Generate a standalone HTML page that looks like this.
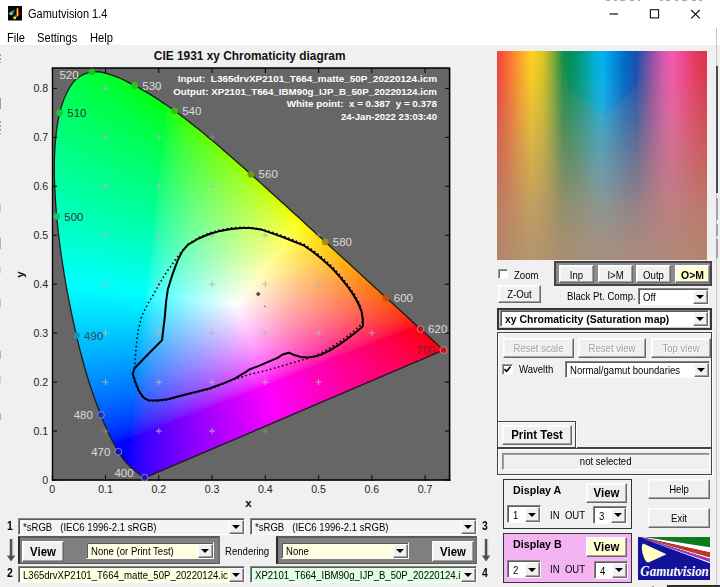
<!DOCTYPE html>
<html lang="en">
<head>
<meta charset="utf-8">
<title>Gamutvision 1.4</title>
<style>
html,body{margin:0;padding:0}
body{width:720px;height:587px;overflow:hidden;position:relative;background:#f0f0f0;font-family:"Liberation Sans",sans-serif;font-size:11px;color:#000}
.abs,.btn,.dd,.fr,.lbl,.cb{position:absolute;box-sizing:border-box}
#titlebar{left:0;top:0;width:720px;height:28px;background:#fff}
#menubar{left:0;top:28px;width:720px;height:17px;background:#fff}
.ttl{position:absolute;left:27.5px;top:7px;font-size:12px;color:#000;transform:scaleX(.915);transform-origin:0 50%;white-space:nowrap}
.mi{position:absolute;top:2px;font-size:12px;color:#000;transform:scaleX(.93);transform-origin:0 50%}
.btn{background:#f0f0f0;border:1px solid;border-color:#fff #6a6a6a #6a6a6a #fff;box-shadow:inset -1px -1px 0 #a3a3a3, inset 1px 1px 0 #fafafa;text-align:center;white-space:nowrap;font-size:11px;line-height:1}
.btn span{position:absolute;left:0;right:0;text-align:center}
.btn.dis{color:#a2a2a2;text-shadow:1px 1px 0 #fff}
.btn.b{font-weight:bold}.btn.b span{transform:scaleX(.95)}.lbl.b{font-weight:bold;transform:scaleX(.93)}.dd.b .t{font-weight:bold;transform:scaleX(.95)}.dd.pl{background:#f4f4f4}
.btn.yl{background:#ffffd2}
.dd{background:#fff;border:1px solid;border-color:#858585 #fdfdfd #fdfdfd #858585;box-shadow:inset 1px 1px 0 #5a5a5a;white-space:nowrap;overflow:hidden;font-size:11px}
.dd .t{position:absolute;left:4px;top:2px;line-height:12px;white-space:pre}
.dd .a{position:absolute;right:0;top:1px;bottom:0;width:15px;background:#f0f0f0;box-sizing:border-box;border:1px solid;border-color:#fff #6a6a6a #6a6a6a #fff;box-shadow:inset -1px -1px 0 #a3a3a3}
.dd .a:after{content:"";position:absolute;left:2px;top:50%;margin-top:-2px;border-left:4px solid transparent;border-right:4px solid transparent;border-top:4px solid #000}
.dd.yl{background:#ffffe1}
.dd.gr{background:#e1ffe1}
.fr{border:1px solid #444;box-shadow:inset 1px 1px 0 #fff, 1px 1px 0 #fff}
.lbl{white-space:pre;line-height:1;font-size:11px}
.cbx{position:absolute;box-sizing:border-box;width:11px;height:11px;background:#fff;border:1px solid;border-color:#9a9a9a #fdfdfd #fdfdfd #9a9a9a;box-shadow:inset 1px 1px 0 #6e6e6e}

#hue{background:linear-gradient(to right,#f04040 0%,#ff7030 5.8%,#ffaa28 11.6%,#ffd41c 16.7%,#dcc824 21.8%,#90b030 26.2%,#189048 31.3%,#009058 34.9%,#00a090 40.8%,#00b0d8 46.6%,#00b4f0 50.2%,#0090e0 55.3%,#0068c8 61.1%,#1450b0 66.2%,#5050a8 69.9%,#9850a8 74.2%,#d858b0 79.3%,#f858b0 83.7%,#f04890 88.8%,#e83860 94.6%,#e03048 100%)}
#hue:after{content:"";position:absolute;left:0;top:0;right:0;bottom:0;background:linear-gradient(to right,#b3856a 0%,#b6966c 16%,#aa8e70 30%,#a59082 50%,#ae887c 75%,#b6846e 100%);-webkit-mask-image:linear-gradient(to bottom,rgba(0,0,0,0) 0%,rgba(0,0,0,.14) 15%,rgba(0,0,0,.52) 45%,rgba(0,0,0,.86) 75%,rgba(0,0,0,.96) 90%,rgba(0,0,0,1) 100%);mask-image:linear-gradient(to bottom,rgba(0,0,0,0) 0%,rgba(0,0,0,.14) 15%,rgba(0,0,0,.52) 45%,rgba(0,0,0,.86) 75%,rgba(0,0,0,.96) 90%,rgba(0,0,0,1) 100%)}
.lbl,.dd .t{transform:scaleX(.87);transform-origin:0 50%}
.btn span{transform:scaleX(.87)}
</style>
</head>
<body>
<div id="titlebar" class="abs"></div>
<div id="menubar" class="abs"></div>
<svg class="plot" width="720" height="587" viewBox="0 0 720 587" style="position:absolute;left:0;top:0">
<defs><clipPath id="lc"><polygon points="145.0,477.6 145.0,477.6 144.9,477.6 144.8,477.6 144.7,477.6 144.6,477.7 144.4,477.6 144.2,477.6 144.0,477.6 143.8,477.6 143.6,477.5 143.3,477.4 143.1,477.3 142.9,477.1 142.6,476.9 142.2,476.6 141.8,476.3 141.3,475.9 140.8,475.5 140.3,475.0 139.8,474.7 139.5,474.4 139.1,474.1 138.8,473.8 138.5,473.6 138.1,473.2 137.7,472.9 137.2,472.5 136.7,472.2 136.2,471.8 135.7,471.3 135.1,470.9 134.6,470.4 134.0,470.0 133.4,469.4 132.7,468.9 132.0,468.3 131.3,467.7 130.6,467.0 129.8,466.3 129.0,465.5 128.2,464.6 127.3,463.8 126.4,462.8 125.5,461.7 124.5,460.5 123.4,459.0 122.2,457.5 121.0,455.8 119.7,453.9 118.4,451.7 117.0,449.3 115.5,446.8 114.0,444.0 112.4,441.0 110.7,437.5 108.9,433.7 107.0,429.6 105.1,425.2 103.0,420.4 100.9,415.0 98.7,409.3 96.3,403.1 93.8,396.5 91.4,389.4 88.9,381.8 86.4,373.5 83.9,364.8 81.4,355.5 78.9,345.8 76.5,335.6 74.0,324.9 71.6,313.6 69.2,301.9 66.9,289.9 64.8,278.0 62.9,265.9 61.0,253.4 59.3,240.9 57.9,228.5 56.7,216.5 55.7,204.6 55.0,192.8 54.5,181.3 54.3,170.1 54.4,159.5 54.8,149.2 55.6,139.3 56.6,129.8 58.0,120.9 59.7,112.8 61.8,105.4 64.2,98.6 66.9,92.4 69.9,87.1 73.0,82.5 76.4,78.9 80.0,76.2 83.9,74.1 87.9,72.8 91.9,71.9 96.0,71.6 100.2,72.0 104.5,72.9 108.8,74.2 113.1,75.6 117.4,77.1 121.8,79.0 126.1,81.1 130.4,83.3 134.7,85.5 138.8,87.7 142.9,90.1 147.0,92.4 151.0,94.9 155.0,97.4 159.0,100.0 162.9,102.6 166.8,105.3 170.7,108.0 174.6,110.8 178.4,113.6 182.3,116.5 186.2,119.4 190.0,122.4 193.8,125.5 197.7,128.5 201.5,131.6 205.3,134.8 209.1,137.9 212.9,141.1 216.7,144.3 220.5,147.6 224.3,150.9 228.1,154.2 231.9,157.5 235.7,160.8 239.5,164.2 243.4,167.5 247.2,170.9 251.0,174.3 254.8,177.7 258.6,181.1 262.4,184.5 266.1,188.0 269.9,191.4 273.7,194.8 277.5,198.2 281.3,201.7 285.0,205.1 288.8,208.5 292.5,211.9 296.2,215.3 299.9,218.6 303.6,222.0 307.3,225.4 310.9,228.7 314.5,232.0 318.1,235.3 321.7,238.6 325.2,241.8 328.7,245.0 332.2,248.2 335.6,251.4 339.0,254.5 342.4,257.6 345.7,260.6 349.0,263.6 352.3,266.6 355.5,269.5 358.6,272.4 361.7,275.2 364.7,278.0 367.7,280.7 370.5,283.3 373.3,285.9 376.1,288.4 378.7,290.8 381.2,293.2 383.7,295.4 386.2,297.7 388.6,299.8 390.9,302.0 393.2,304.1 395.4,306.1 397.5,308.0 399.5,309.8 401.4,311.6 403.3,313.3 405.1,314.9 406.8,316.5 408.5,318.0 410.1,319.5 411.6,320.9 413.1,322.2 414.5,323.5 415.7,324.7 416.9,325.7 418.0,326.8 419.2,327.8 420.5,329.1 422.1,330.6 424.0,332.2 425.8,333.9 427.6,335.6 429.3,337.1 430.7,338.3 431.9,339.5 433.1,340.6 434.2,341.6 435.2,342.5 436.1,343.3 436.9,344.1 437.6,344.7 438.3,345.3 438.9,345.9 439.4,346.4 439.9,346.8 440.3,347.1 440.6,347.5 441.0,347.8 441.4,348.2 441.8,348.6 442.2,348.9 442.6,349.2 442.8,349.5 443.1,349.7 443.2,349.9 443.4,350.0 443.5,350.1 443.5,350.1"/></clipPath><linearGradient id="g0"><stop offset="0" stop-color="#00ff36"/><stop offset="1" stop-color="#00ff2b"/></linearGradient><linearGradient id="g1"><stop offset="0" stop-color="#00ff3d"/><stop offset="1" stop-color="#00ff26"/></linearGradient><linearGradient id="g2"><stop offset="0" stop-color="#00ff41"/><stop offset="1" stop-color="#00ff22"/></linearGradient><linearGradient id="g3"><stop offset="0" stop-color="#00ff45"/><stop offset="0.9778" stop-color="#00ff20"/><stop offset="1" stop-color="#00ff1f"/></linearGradient><linearGradient id="g4"><stop offset="0" stop-color="#00ff48"/><stop offset="0.902" stop-color="#00ff23"/><stop offset="1" stop-color="#00ff1d"/></linearGradient><linearGradient id="g5"><stop offset="0" stop-color="#00ff4b"/><stop offset="0.8596" stop-color="#00ff24"/><stop offset="1" stop-color="#00ff1a"/></linearGradient><linearGradient id="g6"><stop offset="0" stop-color="#00ff4e"/><stop offset="0.8095" stop-color="#00ff27"/><stop offset="1" stop-color="#00ff18"/></linearGradient><linearGradient id="g7"><stop offset="0" stop-color="#00ff50"/><stop offset="0.7794" stop-color="#00ff29"/><stop offset="1" stop-color="#00ff15"/></linearGradient><linearGradient id="g8"><stop offset="0" stop-color="#00ff52"/><stop offset="0.7534" stop-color="#00ff2a"/><stop offset="1" stop-color="#00ff12"/></linearGradient><linearGradient id="g9"><stop offset="0" stop-color="#00ff55"/><stop offset="0.7273" stop-color="#00ff2d"/><stop offset="1" stop-color="#00ff10"/></linearGradient><linearGradient id="g10"><stop offset="0" stop-color="#00ff57"/><stop offset="0.7073" stop-color="#00ff2e"/><stop offset="0.9756" stop-color="#00ff11"/><stop offset="1" stop-color="#00ff0c"/></linearGradient><linearGradient id="g11"><stop offset="0" stop-color="#00ff59"/><stop offset="0.6977" stop-color="#00ff30"/><stop offset="0.9651" stop-color="#00ff12"/><stop offset="1" stop-color="#00ff0a"/></linearGradient><linearGradient id="g12"><stop offset="0" stop-color="#00ff5b"/><stop offset="0.6778" stop-color="#00ff32"/><stop offset="0.9444" stop-color="#00ff14"/><stop offset="1" stop-color="#00ff07"/></linearGradient><linearGradient id="g13"><stop offset="0" stop-color="#00ff5d"/><stop offset="0.6702" stop-color="#00ff33"/><stop offset="0.9362" stop-color="#00ff15"/><stop offset="0.9894" stop-color="#00ff08"/><stop offset="1" stop-color="#00ff02"/></linearGradient><linearGradient id="g14"><stop offset="0" stop-color="#00ff5f"/><stop offset="0.6465" stop-color="#00ff36"/><stop offset="0.9192" stop-color="#00ff15"/><stop offset="0.9798" stop-color="#00ff05"/><stop offset="1" stop-color="#00ff00"/></linearGradient><linearGradient id="g15"><stop offset="0" stop-color="#00ff61"/><stop offset="0.6408" stop-color="#00ff37"/><stop offset="0.9126" stop-color="#00ff16"/><stop offset="0.9709" stop-color="#00ff06"/><stop offset="0.9806" stop-color="#00ff00"/><stop offset="1" stop-color="#00ff00"/></linearGradient><linearGradient id="g16"><stop offset="0" stop-color="#00ff63"/><stop offset="0.6381" stop-color="#00ff38"/><stop offset="0.9143" stop-color="#00ff17"/><stop offset="0.9714" stop-color="#00ff07"/><stop offset="0.981" stop-color="#00ff00"/><stop offset="1" stop-color="#00ff00"/></linearGradient><linearGradient id="g17"><stop offset="0" stop-color="#00ff65"/><stop offset="0.6239" stop-color="#00ff3b"/><stop offset="0.8991" stop-color="#00ff19"/><stop offset="0.9633" stop-color="#00ff09"/><stop offset="0.9725" stop-color="#00ff03"/><stop offset="1" stop-color="#12ff00"/></linearGradient><linearGradient id="g18"><stop offset="0" stop-color="#00ff66"/><stop offset="0.6161" stop-color="#00ff3c"/><stop offset="0.8929" stop-color="#00ff1a"/><stop offset="0.9464" stop-color="#00ff0d"/><stop offset="0.9643" stop-color="#0fff05"/><stop offset="0.9821" stop-color="#17ff00"/><stop offset="1" stop-color="#1dff00"/></linearGradient><linearGradient id="g19"><stop offset="0" stop-color="#00ff68"/><stop offset="0.6121" stop-color="#00ff3d"/><stop offset="0.8879" stop-color="#00ff1a"/><stop offset="0.9224" stop-color="#04ff13"/><stop offset="0.9569" stop-color="#17ff07"/><stop offset="0.9655" stop-color="#1aff00"/><stop offset="1" stop-color="#25ff00"/></linearGradient><linearGradient id="g20"><stop offset="0" stop-color="#00ff6a"/><stop offset="0.6" stop-color="#00ff3f"/><stop offset="0.875" stop-color="#00ff1c"/><stop offset="0.8917" stop-color="#00ff19"/><stop offset="0.9333" stop-color="#18ff0f"/><stop offset="0.9667" stop-color="#23ff00"/><stop offset="1" stop-color="#2cff00"/></linearGradient><linearGradient id="g21"><stop offset="0" stop-color="#00ff6c"/><stop offset="0.5984" stop-color="#00ff41"/><stop offset="0.877" stop-color="#00ff1d"/><stop offset="0.9098" stop-color="#16ff16"/><stop offset="0.959" stop-color="#26ff04"/><stop offset="0.9836" stop-color="#2cff00"/><stop offset="1" stop-color="#30ff00"/></linearGradient><linearGradient id="g22"><stop offset="0" stop-color="#00ff6d"/><stop offset="0.592" stop-color="#00ff42"/><stop offset="0.856" stop-color="#00ff20"/><stop offset="0.872" stop-color="#0fff1e"/><stop offset="0.944" stop-color="#29ff0a"/><stop offset="0.96" stop-color="#2dff00"/><stop offset="1" stop-color="#36ff00"/></linearGradient><linearGradient id="g23"><stop offset="0" stop-color="#00ff6f"/><stop offset="0.5814" stop-color="#00ff44"/><stop offset="0.8372" stop-color="#02ff24"/><stop offset="0.8527" stop-color="#10ff21"/><stop offset="0.938" stop-color="#2eff0b"/><stop offset="0.9535" stop-color="#31ff00"/><stop offset="1" stop-color="#3cff00"/></linearGradient><linearGradient id="g24"><stop offset="0" stop-color="#00ff71"/><stop offset="0.5802" stop-color="#00ff46"/><stop offset="0.8168" stop-color="#00ff28"/><stop offset="0.855" stop-color="#18ff22"/><stop offset="0.9389" stop-color="#32ff0c"/><stop offset="0.9618" stop-color="#38ff00"/><stop offset="1" stop-color="#40ff00"/></linearGradient><linearGradient id="g25"><stop offset="0" stop-color="#00ff73"/><stop offset="0.5704" stop-color="#00ff48"/><stop offset="0.8" stop-color="#00ff2b"/><stop offset="0.8296" stop-color="#16ff26"/><stop offset="0.9333" stop-color="#36ff0d"/><stop offset="0.9556" stop-color="#3cff00"/><stop offset="1" stop-color="#45ff00"/></linearGradient><linearGradient id="g26"><stop offset="0" stop-color="#00ff74"/><stop offset="0.5693" stop-color="#00ff49"/><stop offset="0.7883" stop-color="#00ff2e"/><stop offset="0.8102" stop-color="#13ff2b"/><stop offset="0.9124" stop-color="#35ff15"/><stop offset="0.9489" stop-color="#3eff06"/><stop offset="0.9562" stop-color="#40ff00"/><stop offset="1" stop-color="#49ff00"/></linearGradient><linearGradient id="g27"><stop offset="0" stop-color="#00ff76"/><stop offset="0.5643" stop-color="#00ff4a"/><stop offset="0.7714" stop-color="#00ff31"/><stop offset="0.7857" stop-color="#10ff2f"/><stop offset="0.8643" stop-color="#2eff20"/><stop offset="0.9357" stop-color="#40ff0c"/><stop offset="0.95" stop-color="#43ff00"/><stop offset="1" stop-color="#4eff00"/></linearGradient><linearGradient id="g28"><stop offset="0" stop-color="#00ff78"/><stop offset="0.5556" stop-color="#00ff4c"/><stop offset="0.75" stop-color="#00ff35"/><stop offset="0.7917" stop-color="#1bff2e"/><stop offset="0.9167" stop-color="#41ff12"/><stop offset="0.9514" stop-color="#49ff00"/><stop offset="1" stop-color="#53ff00"/></linearGradient><linearGradient id="g29"><stop offset="0" stop-color="#00ff7a"/><stop offset="0.5548" stop-color="#00ff4e"/><stop offset="0.7397" stop-color="#00ff37"/><stop offset="0.774" stop-color="#19ff32"/><stop offset="0.8973" stop-color="#40ff19"/><stop offset="0.9452" stop-color="#4bff05"/><stop offset="0.9589" stop-color="#4eff00"/><stop offset="1" stop-color="#57ff00"/></linearGradient><linearGradient id="g30"><stop offset="0" stop-color="#00ff7b"/><stop offset="0.5541" stop-color="#00ff4f"/><stop offset="0.7297" stop-color="#00ff3a"/><stop offset="0.7568" stop-color="#16ff36"/><stop offset="0.8649" stop-color="#3bff22"/><stop offset="0.9392" stop-color="#4dff0b"/><stop offset="0.9527" stop-color="#50ff00"/><stop offset="1" stop-color="#5aff00"/></linearGradient><linearGradient id="g31"><stop offset="0" stop-color="#00ff7d"/><stop offset="0.5497" stop-color="#00ff50"/><stop offset="0.7152" stop-color="#00ff3c"/><stop offset="0.7285" stop-color="#0fff3a"/><stop offset="0.8013" stop-color="#2eff2f"/><stop offset="0.9205" stop-color="#4eff12"/><stop offset="0.9404" stop-color="#52ff08"/><stop offset="0.947" stop-color="#54ff01"/><stop offset="1" stop-color="#5fff00"/></linearGradient><linearGradient id="g32"><stop offset="0" stop-color="#00ff7f"/><stop offset="0.5455" stop-color="#00ff52"/><stop offset="0.7078" stop-color="#00ff3f"/><stop offset="0.7208" stop-color="#10ff3d"/><stop offset="0.7922" stop-color="#2fff31"/><stop offset="0.9221" stop-color="#51ff13"/><stop offset="0.9545" stop-color="#59ff00"/><stop offset="1" stop-color="#62ff00"/></linearGradient><linearGradient id="g33"><stop offset="0" stop-color="#00ff80"/><stop offset="0.535" stop-color="#00ff54"/><stop offset="0.6879" stop-color="#00ff42"/><stop offset="0.7197" stop-color="#19ff3d"/><stop offset="0.828" stop-color="#3fff2b"/><stop offset="0.9299" stop-color="#58ff0e"/><stop offset="0.949" stop-color="#5cff00"/><stop offset="1" stop-color="#67ff00"/></linearGradient><linearGradient id="g34"><stop offset="0" stop-color="#00ff82"/><stop offset="0.5346" stop-color="#00ff56"/><stop offset="0.6792" stop-color="#00ff44"/><stop offset="0.7044" stop-color="#16ff41"/><stop offset="0.7987" stop-color="#3aff32"/><stop offset="0.9182" stop-color="#58ff14"/><stop offset="0.9434" stop-color="#5eff08"/><stop offset="0.9497" stop-color="#5fff00"/><stop offset="1" stop-color="#6aff00"/></linearGradient><linearGradient id="g35"><stop offset="0" stop-color="#00ff83"/><stop offset="0.5342" stop-color="#00ff57"/><stop offset="0.6708" stop-color="#00ff47"/><stop offset="0.6894" stop-color="#13ff44"/><stop offset="0.7702" stop-color="#35ff38"/><stop offset="0.913" stop-color="#5bff17"/><stop offset="0.9441" stop-color="#62ff09"/><stop offset="0.9565" stop-color="#64ff00"/><stop offset="1" stop-color="#6dff00"/></linearGradient><linearGradient id="g36"><stop offset="0" stop-color="#00ff85"/><stop offset="0.5305" stop-color="#00ff59"/><stop offset="0.6585" stop-color="#00ff49"/><stop offset="0.6707" stop-color="#10ff47"/><stop offset="0.7378" stop-color="#2fff3d"/><stop offset="0.9024" stop-color="#5dff1a"/><stop offset="0.9451" stop-color="#66ff05"/><stop offset="0.9573" stop-color="#69ff00"/><stop offset="1" stop-color="#72ff00"/></linearGradient><linearGradient id="g37"><stop offset="0" stop-color="#00ff86"/><stop offset="0.5241" stop-color="#00ff5b"/><stop offset="0.6506" stop-color="#03ff4b"/><stop offset="0.6687" stop-color="#15ff49"/><stop offset="0.753" stop-color="#38ff3c"/><stop offset="0.9036" stop-color="#60ff1b"/><stop offset="0.9458" stop-color="#6aff07"/><stop offset="0.9518" stop-color="#6bff00"/><stop offset="1" stop-color="#75ff00"/></linearGradient><linearGradient id="g38"><stop offset="0" stop-color="#00ff88"/><stop offset="0.5207" stop-color="#00ff5d"/><stop offset="0.6391" stop-color="#00ff4e"/><stop offset="0.6686" stop-color="#1aff4a"/><stop offset="0.7692" stop-color="#40ff3b"/><stop offset="0.9112" stop-color="#65ff1a"/><stop offset="0.9467" stop-color="#6dff08"/><stop offset="0.9527" stop-color="#6eff00"/><stop offset="1" stop-color="#79ff00"/></linearGradient><linearGradient id="g39"><stop offset="0" stop-color="#00ff8a"/><stop offset="0.5174" stop-color="#00ff5e"/><stop offset="0.6279" stop-color="#00ff51"/><stop offset="0.6512" stop-color="#17ff4d"/><stop offset="0.7384" stop-color="#3bff40"/><stop offset="0.9012" stop-color="#67ff1c"/><stop offset="0.9419" stop-color="#70ff0a"/><stop offset="0.9535" stop-color="#73ff00"/><stop offset="1" stop-color="#7dff00"/></linearGradient><linearGradient id="g40"><stop offset="0" stop-color="#00ff8b"/><stop offset="0.5172" stop-color="#00ff5f"/><stop offset="0.6207" stop-color="#00ff53"/><stop offset="0.6379" stop-color="#14ff50"/><stop offset="0.7126" stop-color="#36ff46"/><stop offset="0.8908" stop-color="#68ff21"/><stop offset="0.9425" stop-color="#74ff0b"/><stop offset="0.954" stop-color="#76ff00"/><stop offset="1" stop-color="#80ff00"/></linearGradient><linearGradient id="g41"><stop offset="0" stop-color="#00ff8d"/><stop offset="0.5114" stop-color="#00ff61"/><stop offset="0.6136" stop-color="#00ff55"/><stop offset="0.625" stop-color="#11ff53"/><stop offset="0.6875" stop-color="#31ff4b"/><stop offset="0.8693" stop-color="#66ff28"/><stop offset="0.9432" stop-color="#77ff0c"/><stop offset="0.9545" stop-color="#7aff00"/><stop offset="1" stop-color="#83ff00"/></linearGradient><linearGradient id="g42"><stop offset="0" stop-color="#00ff8e"/><stop offset="0.5084" stop-color="#00ff63"/><stop offset="0.5978" stop-color="#00ff58"/><stop offset="0.6257" stop-color="#19ff54"/><stop offset="0.7207" stop-color="#41ff46"/><stop offset="0.8883" stop-color="#6fff22"/><stop offset="0.9441" stop-color="#7cff09"/><stop offset="0.9497" stop-color="#7dff01"/><stop offset="1" stop-color="#88ff00"/></linearGradient><linearGradient id="g43"><stop offset="0" stop-color="#00ff90"/><stop offset="0.5028" stop-color="#00ff65"/><stop offset="0.5912" stop-color="#00ff5a"/><stop offset="0.6133" stop-color="#17ff57"/><stop offset="0.6961" stop-color="#3cff4b"/><stop offset="0.884" stop-color="#71ff24"/><stop offset="0.9448" stop-color="#7fff0a"/><stop offset="0.9558" stop-color="#82ff00"/><stop offset="1" stop-color="#8bff00"/></linearGradient><linearGradient id="g44"><stop offset="0" stop-color="#00ff92"/><stop offset="0.5027" stop-color="#00ff66"/><stop offset="0.5847" stop-color="#00ff5c"/><stop offset="0.6011" stop-color="#14ff5a"/><stop offset="0.6721" stop-color="#37ff50"/><stop offset="0.8689" stop-color="#70ff2a"/><stop offset="0.9399" stop-color="#81ff0f"/><stop offset="0.9563" stop-color="#85ff00"/><stop offset="1" stop-color="#8eff00"/></linearGradient><linearGradient id="g45"><stop offset="0" stop-color="#00ff93"/><stop offset="0.5" stop-color="#00ff68"/><stop offset="0.5753" stop-color="#00ff5e"/><stop offset="0.586" stop-color="#10ff5d"/><stop offset="0.6398" stop-color="#2fff56"/><stop offset="0.8011" stop-color="#63ff3a"/><stop offset="0.9194" stop-color="#81ff18"/><stop offset="0.9462" stop-color="#87ff08"/><stop offset="0.9516" stop-color="#88ff00"/><stop offset="1" stop-color="#93ff00"/></linearGradient><linearGradient id="g46"><stop offset="0" stop-color="#00ff95"/><stop offset="0.4947" stop-color="#00ff6a"/><stop offset="0.5691" stop-color="#02ff61"/><stop offset="0.5798" stop-color="#11ff5f"/><stop offset="0.6383" stop-color="#32ff57"/><stop offset="0.8085" stop-color="#68ff39"/><stop offset="0.9202" stop-color="#84ff19"/><stop offset="0.9468" stop-color="#8aff0a"/><stop offset="0.9574" stop-color="#8dff00"/><stop offset="1" stop-color="#96ff00"/></linearGradient><linearGradient id="g47"><stop offset="0" stop-color="#00ff96"/><stop offset="0.4947" stop-color="#00ff6b"/><stop offset="0.5579" stop-color="#00ff63"/><stop offset="0.5842" stop-color="#1aff60"/><stop offset="0.6684" stop-color="#41ff54"/><stop offset="0.8684" stop-color="#7bff2c"/><stop offset="0.9421" stop-color="#8cff0f"/><stop offset="0.9579" stop-color="#90ff00"/><stop offset="1" stop-color="#99ff00"/></linearGradient><linearGradient id="g48"><stop offset="0" stop-color="#00ff98"/><stop offset="0.4896" stop-color="#00ff6d"/><stop offset="0.5521" stop-color="#00ff66"/><stop offset="0.5729" stop-color="#18ff63"/><stop offset="0.651" stop-color="#3eff58"/><stop offset="0.8542" stop-color="#7aff31"/><stop offset="0.9375" stop-color="#8eff13"/><stop offset="0.9583" stop-color="#93ff00"/><stop offset="1" stop-color="#9dff00"/></linearGradient><linearGradient id="g49"><stop offset="0" stop-color="#00ff9a"/><stop offset="0.4872" stop-color="#00ff6f"/><stop offset="0.5436" stop-color="#00ff68"/><stop offset="0.559" stop-color="#14ff66"/><stop offset="0.6256" stop-color="#38ff5d"/><stop offset="0.8103" stop-color="#73ff3b"/><stop offset="0.9231" stop-color="#8fff19"/><stop offset="0.9487" stop-color="#95ff09"/><stop offset="0.9538" stop-color="#97ff00"/><stop offset="1" stop-color="#a1ff00"/></linearGradient><linearGradient id="g50"><stop offset="0" stop-color="#00ff9b"/><stop offset="0.4873" stop-color="#00ff70"/><stop offset="0.5381" stop-color="#00ff6a"/><stop offset="0.5482" stop-color="#11ff69"/><stop offset="0.599" stop-color="#30ff62"/><stop offset="0.7513" stop-color="#66ff49"/><stop offset="0.8985" stop-color="#8dff24"/><stop offset="0.9492" stop-color="#99ff0a"/><stop offset="0.9594" stop-color="#9bff00"/><stop offset="1" stop-color="#a4ff00"/></linearGradient><linearGradient id="g51"><stop offset="0" stop-color="#00ff9d"/><stop offset="0.4824" stop-color="#00ff72"/><stop offset="0.5276" stop-color="#00ff6d"/><stop offset="0.5528" stop-color="#1aff69"/><stop offset="0.6332" stop-color="#42ff5e"/><stop offset="0.8392" stop-color="#81ff37"/><stop offset="0.9347" stop-color="#99ff16"/><stop offset="0.9598" stop-color="#9fff00"/><stop offset="1" stop-color="#a8ff00"/></linearGradient><linearGradient id="g52"><stop offset="0" stop-color="#00ff9e"/><stop offset="0.4826" stop-color="#00ff74"/><stop offset="0.5224" stop-color="#00ff6f"/><stop offset="0.5423" stop-color="#17ff6c"/><stop offset="0.6119" stop-color="#3cff63"/><stop offset="0.801" stop-color="#7aff41"/><stop offset="0.9204" stop-color="#98ff1e"/><stop offset="0.9552" stop-color="#a1ff08"/><stop offset="0.9602" stop-color="#a2ff00"/><stop offset="1" stop-color="#abff00"/></linearGradient><linearGradient id="g53"><stop offset="0" stop-color="#00ffa0"/><stop offset="0.4755" stop-color="#00ff76"/><stop offset="0.5147" stop-color="#00ff71"/><stop offset="0.5294" stop-color="#14ff6f"/><stop offset="0.5882" stop-color="#37ff67"/><stop offset="0.7549" stop-color="#71ff4b"/><stop offset="0.902" stop-color="#98ff25"/><stop offset="0.9461" stop-color="#a3ff0e"/><stop offset="0.9559" stop-color="#a5ff00"/><stop offset="1" stop-color="#b0ff00"/></linearGradient><linearGradient id="g54"><stop offset="0" stop-color="#00ffa2"/><stop offset="0.4757" stop-color="#00ff77"/><stop offset="0.5097" stop-color="#00ff73"/><stop offset="0.5194" stop-color="#11ff72"/><stop offset="0.568" stop-color="#31ff6b"/><stop offset="0.7087" stop-color="#66ff55"/><stop offset="0.8786" stop-color="#95ff2e"/><stop offset="0.9417" stop-color="#a5ff13"/><stop offset="0.9612" stop-color="#aaff00"/><stop offset="1" stop-color="#b3ff00"/></linearGradient><linearGradient id="g55"><stop offset="0" stop-color="#00ffa3"/><stop offset="0.4712" stop-color="#00ff79"/><stop offset="0.5048" stop-color="#00ff75"/><stop offset="0.5096" stop-color="#0cff75"/><stop offset="0.5433" stop-color="#27ff70"/><stop offset="0.6538" stop-color="#56ff60"/><stop offset="0.8558" stop-color="#93ff36"/><stop offset="0.9375" stop-color="#a7ff17"/><stop offset="0.9567" stop-color="#acff07"/><stop offset="0.9615" stop-color="#adff00"/><stop offset="1" stop-color="#b6ff00"/></linearGradient><linearGradient id="g56"><stop offset="0" stop-color="#00ffa5"/><stop offset="0.4714" stop-color="#00ff7b"/><stop offset="0.4952" stop-color="#00ff78"/><stop offset="0.519" stop-color="#1bff75"/><stop offset="0.5952" stop-color="#43ff6b"/><stop offset="0.7905" stop-color="#84ff48"/><stop offset="0.9143" stop-color="#a5ff23"/><stop offset="0.9524" stop-color="#aeff0e"/><stop offset="0.9619" stop-color="#b1ff00"/><stop offset="1" stop-color="#baff00"/></linearGradient><linearGradient id="g57"><stop offset="0" stop-color="#00ffa6"/><stop offset="0.467" stop-color="#00ff7d"/><stop offset="0.4906" stop-color="#00ff7a"/><stop offset="0.5094" stop-color="#18ff78"/><stop offset="0.5755" stop-color="#3eff6f"/><stop offset="0.75" stop-color="#7bff52"/><stop offset="0.9009" stop-color="#a5ff2a"/><stop offset="0.9528" stop-color="#b2ff0f"/><stop offset="0.967" stop-color="#b5ff00"/><stop offset="1" stop-color="#bdff00"/></linearGradient><linearGradient id="g58"><stop offset="0" stop-color="#00ffa8"/><stop offset="0.4651" stop-color="#00ff7f"/><stop offset="0.4837" stop-color="#00ff7c"/><stop offset="0.4977" stop-color="#15ff7b"/><stop offset="0.5535" stop-color="#38ff73"/><stop offset="0.707" stop-color="#72ff5b"/><stop offset="0.8791" stop-color="#a3ff31"/><stop offset="0.9442" stop-color="#b4ff14"/><stop offset="0.9628" stop-color="#b9ff00"/><stop offset="1" stop-color="#c2ff00"/></linearGradient><linearGradient id="g59"><stop offset="0" stop-color="#00ffaa"/><stop offset="0.4608" stop-color="#00ff81"/><stop offset="0.4793" stop-color="#00ff7e"/><stop offset="0.4885" stop-color="#11ff7d"/><stop offset="0.5346" stop-color="#32ff77"/><stop offset="0.6682" stop-color="#68ff63"/><stop offset="0.8571" stop-color="#a1ff39"/><stop offset="0.9401" stop-color="#b6ff18"/><stop offset="0.9585" stop-color="#bbff08"/><stop offset="0.9631" stop-color="#bcff00"/><stop offset="1" stop-color="#c5ff00"/></linearGradient><linearGradient id="g60"><stop offset="0" stop-color="#00ffab"/><stop offset="0.4612" stop-color="#00ff82"/><stop offset="0.4749" stop-color="#03ff81"/><stop offset="0.484" stop-color="#13ff7f"/><stop offset="0.5342" stop-color="#35ff79"/><stop offset="0.6758" stop-color="#6eff63"/><stop offset="0.863" stop-color="#a6ff39"/><stop offset="0.9406" stop-color="#baff19"/><stop offset="0.9589" stop-color="#beff0a"/><stop offset="0.9635" stop-color="#c0ff00"/><stop offset="1" stop-color="#c8ff00"/></linearGradient><linearGradient id="g61"><stop offset="0" stop-color="#00ffad"/><stop offset="0.4615" stop-color="#00ff84"/><stop offset="0.4661" stop-color="#00ff83"/><stop offset="0.4842" stop-color="#18ff81"/><stop offset="0.5475" stop-color="#3fff79"/><stop offset="0.7104" stop-color="#7cff5e"/><stop offset="0.8778" stop-color="#adff35"/><stop offset="0.9457" stop-color="#bfff17"/><stop offset="0.9683" stop-color="#c4ff00"/><stop offset="1" stop-color="#ccff00"/></linearGradient><linearGradient id="g62"><stop offset="0" stop-color="#00ffae"/><stop offset="0.4574" stop-color="#00ff85"/><stop offset="0.4709" stop-color="#15ff84"/><stop offset="0.5247" stop-color="#39ff7d"/><stop offset="0.6726" stop-color="#74ff66"/><stop offset="0.8565" stop-color="#acff3c"/><stop offset="0.9372" stop-color="#c1ff1b"/><stop offset="0.9596" stop-color="#c7ff07"/><stop offset="0.9641" stop-color="#c8ff00"/><stop offset="1" stop-color="#d1ff00"/></linearGradient><linearGradient id="g63"><stop offset="0" stop-color="#00ffb0"/><stop offset="0.4533" stop-color="#00ff88"/><stop offset="0.4622" stop-color="#11ff86"/><stop offset="0.5022" stop-color="#30ff81"/><stop offset="0.6222" stop-color="#65ff70"/><stop offset="0.8311" stop-color="#a8ff44"/><stop offset="0.9289" stop-color="#c2ff21"/><stop offset="0.96" stop-color="#caff09"/><stop offset="0.9644" stop-color="#cbff00"/><stop offset="1" stop-color="#d4ff00"/></linearGradient><linearGradient id="g64"><stop offset="0" stop-color="#00ffb2"/><stop offset="0.4493" stop-color="#00ff8a"/><stop offset="0.4537" stop-color="#0cff89"/><stop offset="0.4846" stop-color="#29ff85"/><stop offset="0.5815" stop-color="#59ff78"/><stop offset="0.8018" stop-color="#a3ff4e"/><stop offset="0.9163" stop-color="#c2ff28"/><stop offset="0.9559" stop-color="#cdff0f"/><stop offset="0.9648" stop-color="#cfff00"/><stop offset="1" stop-color="#d8ff00"/></linearGradient><linearGradient id="g65"><stop offset="0" stop-color="#00ffb3"/><stop offset="0.441" stop-color="#00ff8c"/><stop offset="0.4629" stop-color="#1cff8a"/><stop offset="0.5284" stop-color="#44ff81"/><stop offset="0.6943" stop-color="#84ff67"/><stop offset="0.869" stop-color="#b9ff3c"/><stop offset="0.9432" stop-color="#cdff1b"/><stop offset="0.9651" stop-color="#d2ff05"/><stop offset="0.9738" stop-color="#d5ff00"/><stop offset="1" stop-color="#dbff00"/></linearGradient><linearGradient id="g66"><stop offset="0" stop-color="#00ffb5"/><stop offset="0.4372" stop-color="#00ff8f"/><stop offset="0.4545" stop-color="#19ff8d"/><stop offset="0.5152" stop-color="#41ff85"/><stop offset="0.671" stop-color="#80ff6d"/><stop offset="0.8528" stop-color="#b8ff42"/><stop offset="0.9394" stop-color="#cfff1f"/><stop offset="0.9654" stop-color="#d6ff08"/><stop offset="0.9697" stop-color="#d7ff00"/><stop offset="1" stop-color="#dfff00"/></linearGradient><linearGradient id="g67"><stop offset="0" stop-color="#00ffb7"/><stop offset="0.4316" stop-color="#00ff91"/><stop offset="0.4444" stop-color="#16ff8f"/><stop offset="0.4957" stop-color="#3bff89"/><stop offset="0.6325" stop-color="#76ff74"/><stop offset="0.8291" stop-color="#b5ff4a"/><stop offset="0.9274" stop-color="#d1ff24"/><stop offset="0.9573" stop-color="#d8ff0f"/><stop offset="0.9658" stop-color="#dbff00"/><stop offset="1" stop-color="#e3ff00"/></linearGradient><linearGradient id="g68"><stop offset="0" stop-color="#00ffb9"/><stop offset="0.428" stop-color="#00ff93"/><stop offset="0.4364" stop-color="#12ff92"/><stop offset="0.4746" stop-color="#31ff8d"/><stop offset="0.589" stop-color="#68ff7d"/><stop offset="0.8051" stop-color="#b2ff52"/><stop offset="0.9195" stop-color="#d2ff2a"/><stop offset="0.9576" stop-color="#dcff10"/><stop offset="0.9703" stop-color="#dfff00"/><stop offset="1" stop-color="#e7ff00"/></linearGradient><linearGradient id="g69"><stop offset="0" stop-color="#00ffba"/><stop offset="0.4244" stop-color="#02ff95"/><stop offset="0.4328" stop-color="#13ff94"/><stop offset="0.4748" stop-color="#35ff8f"/><stop offset="0.5924" stop-color="#6cff7e"/><stop offset="0.8067" stop-color="#b5ff53"/><stop offset="0.9202" stop-color="#d6ff2b"/><stop offset="0.958" stop-color="#e0ff12"/><stop offset="0.9706" stop-color="#e3ff00"/><stop offset="1" stop-color="#eaff00"/></linearGradient><linearGradient id="g70"><stop offset="0" stop-color="#00ffbc"/><stop offset="0.4142" stop-color="#00ff98"/><stop offset="0.4351" stop-color="#1dff95"/><stop offset="0.4979" stop-color="#46ff8e"/><stop offset="0.6569" stop-color="#88ff75"/><stop offset="0.841" stop-color="#c3ff4a"/><stop offset="0.9331" stop-color="#ddff25"/><stop offset="0.9623" stop-color="#e4ff0f"/><stop offset="0.9707" stop-color="#e7ff00"/><stop offset="1" stop-color="#eeff00"/></linearGradient><linearGradient id="g71"><stop offset="0" stop-color="#00ffbd"/><stop offset="0.4108" stop-color="#00ff9a"/><stop offset="0.4232" stop-color="#16ff99"/><stop offset="0.4689" stop-color="#39ff93"/><stop offset="0.5934" stop-color="#73ff81"/><stop offset="0.805" stop-color="#bcff56"/><stop offset="0.917" stop-color="#dcff2f"/><stop offset="0.9585" stop-color="#e7ff14"/><stop offset="0.9668" stop-color="#e9ff0b"/><stop offset="0.971" stop-color="#eaff00"/><stop offset="1" stop-color="#f2ff00"/></linearGradient><linearGradient id="g72"><stop offset="0" stop-color="#00ffbf"/><stop offset="0.4057" stop-color="#00ff9c"/><stop offset="0.418" stop-color="#17ff9b"/><stop offset="0.4672" stop-color="#3cff95"/><stop offset="0.5984" stop-color="#79ff82"/><stop offset="0.8074" stop-color="#c1ff56"/><stop offset="0.918" stop-color="#e1ff2e"/><stop offset="0.959" stop-color="#ecff12"/><stop offset="0.9713" stop-color="#efff00"/><stop offset="1" stop-color="#f6ff00"/></linearGradient><linearGradient id="g73"><stop offset="0" stop-color="#00ffc1"/><stop offset="0.4024" stop-color="#00ff9f"/><stop offset="0.4106" stop-color="#13ff9e"/><stop offset="0.4472" stop-color="#33ff99"/><stop offset="0.5528" stop-color="#69ff8b"/><stop offset="0.7724" stop-color="#b9ff61"/><stop offset="0.9024" stop-color="#e0ff36"/><stop offset="0.9553" stop-color="#eeff17"/><stop offset="0.9715" stop-color="#f3ff00"/><stop offset="1" stop-color="#faff00"/></linearGradient><linearGradient id="g74"><stop offset="0" stop-color="#00ffc3"/><stop offset="0.3952" stop-color="#00ffa1"/><stop offset="0.3992" stop-color="#04ffa1"/><stop offset="0.4073" stop-color="#14ffa0"/><stop offset="0.4476" stop-color="#36ff9b"/><stop offset="0.5605" stop-color="#70ff8c"/><stop offset="0.7823" stop-color="#c0ff60"/><stop offset="0.9073" stop-color="#e5ff36"/><stop offset="0.9556" stop-color="#f2ff18"/><stop offset="0.9677" stop-color="#f5ff0a"/><stop offset="0.9718" stop-color="#f6ff00"/><stop offset="1" stop-color="#feff00"/></linearGradient><linearGradient id="g75"><stop offset="0" stop-color="#00ffc4"/><stop offset="0.3896" stop-color="#00ffa3"/><stop offset="0.4056" stop-color="#1affa2"/><stop offset="0.4578" stop-color="#41ff9b"/><stop offset="0.5904" stop-color="#80ff89"/><stop offset="0.7992" stop-color="#c9ff5d"/><stop offset="0.9116" stop-color="#eaff35"/><stop offset="0.9598" stop-color="#f7ff16"/><stop offset="0.9679" stop-color="#f9ff0c"/><stop offset="0.9719" stop-color="#faff00"/><stop offset="1" stop-color="#fffd00"/></linearGradient><linearGradient id="g76"><stop offset="0" stop-color="#00ffc6"/><stop offset="0.3865" stop-color="#00ffa6"/><stop offset="0.3984" stop-color="#17ffa4"/><stop offset="0.4422" stop-color="#3bff9f"/><stop offset="0.5618" stop-color="#77ff8f"/><stop offset="0.7809" stop-color="#c6ff64"/><stop offset="0.9044" stop-color="#ebff3a"/><stop offset="0.9562" stop-color="#faff1b"/><stop offset="0.9761" stop-color="#ffff00"/><stop offset="1" stop-color="#fff900"/></linearGradient><linearGradient id="g77"><stop offset="0" stop-color="#00ffc8"/><stop offset="0.3834" stop-color="#00ffa8"/><stop offset="0.3913" stop-color="#12ffa7"/><stop offset="0.4269" stop-color="#34ffa3"/><stop offset="0.5296" stop-color="#6cff96"/><stop offset="0.7391" stop-color="#bcff70"/><stop offset="0.8814" stop-color="#e9ff45"/><stop offset="0.9486" stop-color="#fbff22"/><stop offset="0.9684" stop-color="#fffd0f"/><stop offset="0.9763" stop-color="#fffb00"/><stop offset="1" stop-color="#fff500"/></linearGradient><linearGradient id="g78"><stop offset="0" stop-color="#00ffca"/><stop offset="0.3789" stop-color="#00ffaa"/><stop offset="0.3828" stop-color="#0dffaa"/><stop offset="0.4102" stop-color="#2cffa7"/><stop offset="0.4922" stop-color="#5eff9d"/><stop offset="0.6719" stop-color="#a9ff7f"/><stop offset="0.8438" stop-color="#e2ff53"/><stop offset="0.9336" stop-color="#fcff2b"/><stop offset="0.9648" stop-color="#fffa10"/><stop offset="0.9727" stop-color="#fff800"/><stop offset="1" stop-color="#fff000"/></linearGradient><linearGradient id="g79"><stop offset="0" stop-color="#00ffcb"/><stop offset="0.3721" stop-color="#00ffad"/><stop offset="0.3915" stop-color="#1effab"/><stop offset="0.4496" stop-color="#49ffa4"/><stop offset="0.5891" stop-color="#8cff90"/><stop offset="0.7907" stop-color="#d5ff65"/><stop offset="0.907" stop-color="#f8ff3b"/><stop offset="0.9496" stop-color="#fffa21"/><stop offset="0.969" stop-color="#fff50c"/><stop offset="0.9729" stop-color="#fff403"/><stop offset="1" stop-color="#ffed00"/></linearGradient><linearGradient id="g80"><stop offset="0" stop-color="#00ffcd"/><stop offset="0.3668" stop-color="#00ffaf"/><stop offset="0.3822" stop-color="#1bffae"/><stop offset="0.4324" stop-color="#43ffa8"/><stop offset="0.5598" stop-color="#84ff97"/><stop offset="0.7722" stop-color="#d3ff6c"/><stop offset="0.8958" stop-color="#f9ff42"/><stop offset="0.9382" stop-color="#fff92a"/><stop offset="0.9691" stop-color="#fff10e"/><stop offset="0.9768" stop-color="#ffef00"/><stop offset="1" stop-color="#ffe900"/></linearGradient><linearGradient id="g81"><stop offset="0" stop-color="#00ffcf"/><stop offset="0.364" stop-color="#00ffb2"/><stop offset="0.3755" stop-color="#18ffb0"/><stop offset="0.4176" stop-color="#3dffac"/><stop offset="0.5287" stop-color="#79ff9d"/><stop offset="0.7395" stop-color="#cbff76"/><stop offset="0.8774" stop-color="#f7ff4b"/><stop offset="0.9195" stop-color="#fffb36"/><stop offset="0.9655" stop-color="#ffee14"/><stop offset="0.977" stop-color="#ffeb00"/><stop offset="1" stop-color="#ffe500"/></linearGradient><linearGradient id="g82"><stop offset="0" stop-color="#00ffd1"/><stop offset="0.3612" stop-color="#00ffb4"/><stop offset="0.3688" stop-color="#13ffb3"/><stop offset="0.403" stop-color="#35ffaf"/><stop offset="0.4981" stop-color="#6dffa4"/><stop offset="0.692" stop-color="#beff83"/><stop offset="0.8517" stop-color="#f3ff57"/><stop offset="0.9049" stop-color="#fffb40"/><stop offset="0.962" stop-color="#ffeb18"/><stop offset="0.9734" stop-color="#ffe80b"/><stop offset="0.9772" stop-color="#ffe700"/><stop offset="1" stop-color="#ffe100"/></linearGradient><linearGradient id="g83"><stop offset="0" stop-color="#00ffd2"/><stop offset="0.3534" stop-color="#00ffb7"/><stop offset="0.3571" stop-color="#03ffb6"/><stop offset="0.3647" stop-color="#15ffb5"/><stop offset="0.3985" stop-color="#36ffb2"/><stop offset="0.4962" stop-color="#70ffa6"/><stop offset="0.688" stop-color="#c1ff85"/><stop offset="0.8459" stop-color="#f6ff5a"/><stop offset="0.8872" stop-color="#fffc48"/><stop offset="0.9586" stop-color="#ffe819"/><stop offset="0.9774" stop-color="#ffe300"/><stop offset="1" stop-color="#ffdd00"/></linearGradient><linearGradient id="g84"><stop offset="0" stop-color="#00ffd4"/><stop offset="0.3507" stop-color="#00ffb9"/><stop offset="0.3657" stop-color="#1bffb7"/><stop offset="0.4104" stop-color="#42ffb2"/><stop offset="0.5261" stop-color="#81ffa4"/><stop offset="0.7351" stop-color="#d5ff7d"/><stop offset="0.8657" stop-color="#fffe54"/><stop offset="0.9552" stop-color="#ffe51d"/><stop offset="0.9739" stop-color="#ffe007"/><stop offset="0.9776" stop-color="#ffdf00"/><stop offset="1" stop-color="#ffd900"/></linearGradient><linearGradient id="g85"><stop offset="0" stop-color="#00ffd6"/><stop offset="0.3457" stop-color="#00ffbb"/><stop offset="0.3569" stop-color="#17ffba"/><stop offset="0.3978" stop-color="#3effb6"/><stop offset="0.5056" stop-color="#7bffa8"/><stop offset="0.7063" stop-color="#cfff85"/><stop offset="0.8513" stop-color="#ffff5b"/><stop offset="0.9517" stop-color="#ffe221"/><stop offset="0.974" stop-color="#ffdc09"/><stop offset="0.9777" stop-color="#ffdb00"/><stop offset="1" stop-color="#ffd500"/></linearGradient><linearGradient id="g86"><stop offset="0" stop-color="#00ffd8"/><stop offset="0.3432" stop-color="#00ffbe"/><stop offset="0.3506" stop-color="#13ffbd"/><stop offset="0.3801" stop-color="#33ffba"/><stop offset="0.4649" stop-color="#6affb0"/><stop offset="0.6384" stop-color="#b9ff95"/><stop offset="0.8155" stop-color="#f8ff6a"/><stop offset="0.8524" stop-color="#fffb5b"/><stop offset="0.9557" stop-color="#ffdd1e"/><stop offset="0.9742" stop-color="#ffd80b"/><stop offset="0.9779" stop-color="#ffd700"/><stop offset="1" stop-color="#ffd100"/></linearGradient><linearGradient id="g87"><stop offset="0" stop-color="#00ffda"/><stop offset="0.3407" stop-color="#00ffc0"/><stop offset="0.3443" stop-color="#0effc0"/><stop offset="0.3663" stop-color="#2affbd"/><stop offset="0.4359" stop-color="#5cffb6"/><stop offset="0.5897" stop-color="#a8ffa0"/><stop offset="0.7839" stop-color="#f1ff76"/><stop offset="0.8352" stop-color="#fffc64"/><stop offset="0.9524" stop-color="#ffda22"/><stop offset="0.9744" stop-color="#ffd40c"/><stop offset="0.9817" stop-color="#ffd200"/><stop offset="1" stop-color="#ffce00"/></linearGradient><linearGradient id="g88"><stop offset="0" stop-color="#00ffdb"/><stop offset="0.3321" stop-color="#00ffc3"/><stop offset="0.3504" stop-color="#20ffc1"/><stop offset="0.4015" stop-color="#4bffbc"/><stop offset="0.5255" stop-color="#8fffac"/><stop offset="0.7336" stop-color="#e4ff85"/><stop offset="0.8212" stop-color="#fffd6b"/><stop offset="0.9526" stop-color="#ffd622"/><stop offset="0.9745" stop-color="#ffd00e"/><stop offset="0.9818" stop-color="#ffce00"/><stop offset="1" stop-color="#ffca00"/></linearGradient><linearGradient id="g89"><stop offset="0" stop-color="#00ffdd"/><stop offset="0.3285" stop-color="#00ffc5"/><stop offset="0.343" stop-color="#1cffc4"/><stop offset="0.3863" stop-color="#44ffbf"/><stop offset="0.4982" stop-color="#86ffb2"/><stop offset="0.6968" stop-color="#dbff90"/><stop offset="0.8087" stop-color="#fffc70"/><stop offset="0.9495" stop-color="#ffd223"/><stop offset="0.9747" stop-color="#ffcc09"/><stop offset="0.9783" stop-color="#ffcb00"/><stop offset="1" stop-color="#ffc500"/></linearGradient><linearGradient id="g90"><stop offset="0" stop-color="#00ffdf"/><stop offset="0.3262" stop-color="#00ffc7"/><stop offset="0.3369" stop-color="#19ffc6"/><stop offset="0.3728" stop-color="#3dffc3"/><stop offset="0.4695" stop-color="#7affb8"/><stop offset="0.6523" stop-color="#cdff9b"/><stop offset="0.7957" stop-color="#fffc76"/><stop offset="0.9462" stop-color="#ffcf26"/><stop offset="0.9749" stop-color="#ffc80b"/><stop offset="0.9785" stop-color="#ffc702"/><stop offset="1" stop-color="#ffc100"/></linearGradient><linearGradient id="g91"><stop offset="0" stop-color="#00ffe1"/><stop offset="0.3238" stop-color="#00ffca"/><stop offset="0.331" stop-color="#14ffc9"/><stop offset="0.3594" stop-color="#35ffc6"/><stop offset="0.4413" stop-color="#6dffbe"/><stop offset="0.605" stop-color="#bdffa6"/><stop offset="0.7794" stop-color="#fffe7e"/><stop offset="0.9466" stop-color="#ffcb26"/><stop offset="0.9751" stop-color="#ffc40c"/><stop offset="0.9822" stop-color="#ffc200"/><stop offset="1" stop-color="#ffbd00"/></linearGradient><linearGradient id="g92"><stop offset="0" stop-color="#00ffe3"/><stop offset="0.3191" stop-color="#02ffcc"/><stop offset="0.3227" stop-color="#0fffcc"/><stop offset="0.344" stop-color="#2cffca"/><stop offset="0.4113" stop-color="#60ffc3"/><stop offset="0.5567" stop-color="#acffb0"/><stop offset="0.7553" stop-color="#fcff88"/><stop offset="0.8794" stop-color="#ffda4c"/><stop offset="0.961" stop-color="#ffc41c"/><stop offset="0.9787" stop-color="#ffbf08"/><stop offset="0.9823" stop-color="#ffbe00"/><stop offset="1" stop-color="#ffba00"/></linearGradient><linearGradient id="g93"><stop offset="0" stop-color="#00ffe5"/><stop offset="0.3134" stop-color="#00ffcf"/><stop offset="0.3275" stop-color="#1cffce"/><stop offset="0.3697" stop-color="#46ffca"/><stop offset="0.4754" stop-color="#87ffbe"/><stop offset="0.662" stop-color="#ddffa0"/><stop offset="0.7606" stop-color="#fffd88"/><stop offset="0.9472" stop-color="#ffc327"/><stop offset="0.9754" stop-color="#ffbc0f"/><stop offset="0.9824" stop-color="#ffba00"/><stop offset="1" stop-color="#ffb600"/></linearGradient><linearGradient id="g94"><stop offset="0" stop-color="#00ffe6"/><stop offset="0.3101" stop-color="#00ffd2"/><stop offset="0.3206" stop-color="#18ffd1"/><stop offset="0.3554" stop-color="#3effcd"/><stop offset="0.446" stop-color="#7bffc4"/><stop offset="0.6167" stop-color="#ceffab"/><stop offset="0.7456" stop-color="#fffd8e"/><stop offset="0.9477" stop-color="#ffbf25"/><stop offset="0.9756" stop-color="#ffb70b"/><stop offset="0.9826" stop-color="#ffb500"/><stop offset="1" stop-color="#ffb100"/></linearGradient><linearGradient id="g95"><stop offset="0" stop-color="#00ffe8"/><stop offset="0.308" stop-color="#00ffd4"/><stop offset="0.3149" stop-color="#14ffd3"/><stop offset="0.3426" stop-color="#36ffd1"/><stop offset="0.4187" stop-color="#6effc9"/><stop offset="0.5709" stop-color="#beffb5"/><stop offset="0.7336" stop-color="#fffe94"/><stop offset="0.9481" stop-color="#ffbb25"/><stop offset="0.9758" stop-color="#ffb30d"/><stop offset="0.9827" stop-color="#ffb200"/><stop offset="1" stop-color="#ffad00"/></linearGradient><linearGradient id="g96"><stop offset="0" stop-color="#00ffea"/><stop offset="0.3034" stop-color="#00ffd6"/><stop offset="0.3069" stop-color="#0effd6"/><stop offset="0.3276" stop-color="#2dffd4"/><stop offset="0.3897" stop-color="#60ffcf"/><stop offset="0.5241" stop-color="#acffbf"/><stop offset="0.7172" stop-color="#ffff9b"/><stop offset="0.9483" stop-color="#ffb725"/><stop offset="0.9759" stop-color="#ffaf0e"/><stop offset="0.9828" stop-color="#ffae00"/><stop offset="1" stop-color="#ffa900"/></linearGradient><linearGradient id="g97"><stop offset="0" stop-color="#00ffec"/><stop offset="0.2979" stop-color="#00ffd9"/><stop offset="0.3014" stop-color="#04ffd9"/><stop offset="0.3082" stop-color="#17ffd8"/><stop offset="0.339" stop-color="#3bffd6"/><stop offset="0.4212" stop-color="#77ffce"/><stop offset="0.5788" stop-color="#c9ffb9"/><stop offset="0.7123" stop-color="#fffd9e"/><stop offset="0.9349" stop-color="#ffb62e"/><stop offset="0.976" stop-color="#ffab0f"/><stop offset="0.9829" stop-color="#ffaa00"/><stop offset="1" stop-color="#ffa500"/></linearGradient><linearGradient id="g98"><stop offset="0" stop-color="#00ffee"/><stop offset="0.2959" stop-color="#00ffdc"/><stop offset="0.3095" stop-color="#1effdb"/><stop offset="0.3503" stop-color="#48ffd7"/><stop offset="0.449" stop-color="#8affcd"/><stop offset="0.619" stop-color="#dfffb5"/><stop offset="0.7041" stop-color="#fffda2"/><stop offset="0.9218" stop-color="#ffb636"/><stop offset="0.9728" stop-color="#ffa813"/><stop offset="0.9864" stop-color="#ffa500"/><stop offset="1" stop-color="#ffa100"/></linearGradient><linearGradient id="g99"><stop offset="0" stop-color="#00fff0"/><stop offset="0.2905" stop-color="#00ffde"/><stop offset="0.3007" stop-color="#1affdd"/><stop offset="0.3345" stop-color="#41ffdb"/><stop offset="0.4223" stop-color="#80ffd2"/><stop offset="0.5811" stop-color="#d3ffbe"/><stop offset="0.6892" stop-color="#fffda8"/><stop offset="0.902" stop-color="#ffb73f"/><stop offset="0.9662" stop-color="#ffa517"/><stop offset="0.9797" stop-color="#ffa207"/><stop offset="0.9831" stop-color="#ffa100"/><stop offset="1" stop-color="#ff9d00"/></linearGradient><linearGradient id="g100"><stop offset="0" stop-color="#00fff2"/><stop offset="0.2886" stop-color="#00ffe1"/><stop offset="0.2953" stop-color="#15ffe0"/><stop offset="0.3221" stop-color="#38ffde"/><stop offset="0.396" stop-color="#72ffd8"/><stop offset="0.5403" stop-color="#c3ffc7"/><stop offset="0.6779" stop-color="#fffeae"/><stop offset="0.8893" stop-color="#ffb646"/><stop offset="0.9664" stop-color="#ffa118"/><stop offset="0.9799" stop-color="#ff9e09"/><stop offset="0.9832" stop-color="#ff9d00"/><stop offset="1" stop-color="#ff9900"/></linearGradient><linearGradient id="g101"><stop offset="0" stop-color="#00fff4"/><stop offset="0.2867" stop-color="#00ffe3"/><stop offset="0.29" stop-color="#0fffe3"/><stop offset="0.31" stop-color="#2fffe2"/><stop offset="0.37" stop-color="#63ffdc"/><stop offset="0.4967" stop-color="#b1ffcf"/><stop offset="0.6633" stop-color="#feffb5"/><stop offset="0.88" stop-color="#ffb54a"/><stop offset="0.9633" stop-color="#ff9e1b"/><stop offset="0.98" stop-color="#ff9a0a"/><stop offset="0.9867" stop-color="#ff9800"/><stop offset="1" stop-color="#ff9500"/></linearGradient><linearGradient id="g102"><stop offset="0" stop-color="#00fff6"/><stop offset="0.2791" stop-color="#00ffe6"/><stop offset="0.2924" stop-color="#1effe5"/><stop offset="0.3289" stop-color="#47ffe2"/><stop offset="0.4186" stop-color="#88ffda"/><stop offset="0.5748" stop-color="#dcffc7"/><stop offset="0.6611" stop-color="#fffcb6"/><stop offset="0.8638" stop-color="#ffb652"/><stop offset="0.9635" stop-color="#ff9a1c"/><stop offset="0.9834" stop-color="#ff9505"/><stop offset="0.99" stop-color="#ff9300"/><stop offset="1" stop-color="#ff9100"/></linearGradient><linearGradient id="g103"><stop offset="0" stop-color="#00fff8"/><stop offset="0.2772" stop-color="#00ffe9"/><stop offset="0.2871" stop-color="#1affe8"/><stop offset="0.3168" stop-color="#3fffe6"/><stop offset="0.396" stop-color="#7dffdf"/><stop offset="0.5413" stop-color="#d0ffcf"/><stop offset="0.6502" stop-color="#fffdbc"/><stop offset="0.8515" stop-color="#ffb558"/><stop offset="0.9604" stop-color="#ff971f"/><stop offset="0.9835" stop-color="#ff9107"/><stop offset="0.9868" stop-color="#ff9000"/><stop offset="1" stop-color="#ff8d00"/></linearGradient><linearGradient id="g104"><stop offset="0" stop-color="#00fffa"/><stop offset="0.2754" stop-color="#00ffeb"/><stop offset="0.282" stop-color="#15ffeb"/><stop offset="0.3049" stop-color="#36ffe9"/><stop offset="0.3705" stop-color="#6effe4"/><stop offset="0.5016" stop-color="#bfffd7"/><stop offset="0.6393" stop-color="#fffdc1"/><stop offset="0.8361" stop-color="#ffb65f"/><stop offset="0.9574" stop-color="#ff9421"/><stop offset="0.9836" stop-color="#ff8d09"/><stop offset="0.9869" stop-color="#ff8c00"/><stop offset="1" stop-color="#ff8900"/></linearGradient><linearGradient id="g105"><stop offset="0" stop-color="#00fffc"/><stop offset="0.2704" stop-color="#00ffee"/><stop offset="0.2736" stop-color="#0effee"/><stop offset="0.2899" stop-color="#2bffed"/><stop offset="0.342" stop-color="#5effe9"/><stop offset="0.4528" stop-color="#a9ffdf"/><stop offset="0.6189" stop-color="#feffc9"/><stop offset="0.8339" stop-color="#ffb15f"/><stop offset="0.9577" stop-color="#ff8f20"/><stop offset="0.9805" stop-color="#ff890a"/><stop offset="0.987" stop-color="#ff8700"/><stop offset="1" stop-color="#ff8400"/></linearGradient><linearGradient id="g106"><stop offset="0" stop-color="#00fffe"/><stop offset="0.2654" stop-color="#00fff1"/><stop offset="0.2686" stop-color="#03fff0"/><stop offset="0.2751" stop-color="#18fff0"/><stop offset="0.301" stop-color="#3cffee"/><stop offset="0.3722" stop-color="#78ffe9"/><stop offset="0.5081" stop-color="#ccffdc"/><stop offset="0.6181" stop-color="#fffdcb"/><stop offset="0.8058" stop-color="#ffb66c"/><stop offset="0.9547" stop-color="#ff8c22"/><stop offset="0.9806" stop-color="#ff850c"/><stop offset="0.9871" stop-color="#ff8300"/><stop offset="1" stop-color="#ff8000"/></linearGradient><linearGradient id="g107"><stop offset="0" stop-color="#00feff"/><stop offset="0.2637" stop-color="#00fff3"/><stop offset="0.2765" stop-color="#1ffff2"/><stop offset="0.3119" stop-color="#4afff0"/><stop offset="0.3987" stop-color="#8effea"/><stop offset="0.5466" stop-color="#e3ffda"/><stop offset="0.6109" stop-color="#fffcce"/><stop offset="0.7974" stop-color="#ffb570"/><stop offset="0.9518" stop-color="#ff8825"/><stop offset="0.9807" stop-color="#ff810d"/><stop offset="0.9871" stop-color="#ff7f00"/><stop offset="1" stop-color="#ff7c00"/></linearGradient><linearGradient id="g108"><stop offset="0" stop-color="#00fcff"/><stop offset="0.2596" stop-color="#00fff6"/><stop offset="0.2692" stop-color="#1bfff5"/><stop offset="0.2981" stop-color="#42fff4"/><stop offset="0.3718" stop-color="#80ffee"/><stop offset="0.5064" stop-color="#d3ffe2"/><stop offset="0.5994" stop-color="#fffcd4"/><stop offset="0.7821" stop-color="#ffb577"/><stop offset="0.9519" stop-color="#ff8425"/><stop offset="0.984" stop-color="#ff7c09"/><stop offset="0.9872" stop-color="#ff7b00"/><stop offset="1" stop-color="#ff7800"/></linearGradient><linearGradient id="g109"><stop offset="0" stop-color="#00faff"/><stop offset="0.2452" stop-color="#00fff9"/><stop offset="0.258" stop-color="#00fff9"/><stop offset="0.2643" stop-color="#16fff8"/><stop offset="0.2866" stop-color="#38fff7"/><stop offset="0.3503" stop-color="#73fff3"/><stop offset="0.4745" stop-color="#c5ffe9"/><stop offset="0.5892" stop-color="#fffdd9"/><stop offset="0.7675" stop-color="#ffb67d"/><stop offset="0.9522" stop-color="#ff8025"/><stop offset="0.9841" stop-color="#ff780b"/><stop offset="0.9904" stop-color="#ff7600"/><stop offset="1" stop-color="#ff7400"/></linearGradient><linearGradient id="g110"><stop offset="0" stop-color="#00f8ff"/><stop offset="0.2563" stop-color="#00fffb"/><stop offset="0.2595" stop-color="#10fffb"/><stop offset="0.2753" stop-color="#2dfffa"/><stop offset="0.3228" stop-color="#60fff7"/><stop offset="0.4272" stop-color="#acfff0"/><stop offset="0.5759" stop-color="#ffffe0"/><stop offset="0.7532" stop-color="#ffb784"/><stop offset="0.9525" stop-color="#ff7c25"/><stop offset="0.9842" stop-color="#ff740c"/><stop offset="0.9905" stop-color="#ff7200"/><stop offset="1" stop-color="#ff7000"/></linearGradient><linearGradient id="g111"><stop offset="0" stop-color="#00f6ff"/><stop offset="0.2484" stop-color="#00fffe"/><stop offset="0.2516" stop-color="#06fffe"/><stop offset="0.2579" stop-color="#1afffe"/><stop offset="0.283" stop-color="#3efffc"/><stop offset="0.3491" stop-color="#7bfff8"/><stop offset="0.4717" stop-color="#cdffef"/><stop offset="0.5692" stop-color="#fffde2"/><stop offset="0.739" stop-color="#ffb689"/><stop offset="0.9497" stop-color="#ff7726"/><stop offset="0.9811" stop-color="#ff6f0d"/><stop offset="0.9874" stop-color="#ff6e00"/><stop offset="1" stop-color="#ff6b00"/></linearGradient><linearGradient id="g112"><stop offset="0" stop-color="#00f4ff"/><stop offset="0.2469" stop-color="#00fdff"/><stop offset="0.2562" stop-color="#1bfeff"/><stop offset="0.2844" stop-color="#43ffff"/><stop offset="0.3563" stop-color="#84fffb"/><stop offset="0.4844" stop-color="#d8fff1"/><stop offset="0.5594" stop-color="#fffde8"/><stop offset="0.7281" stop-color="#ffb68e"/><stop offset="0.95" stop-color="#ff7326"/><stop offset="0.9812" stop-color="#ff6b0e"/><stop offset="0.9906" stop-color="#ff6900"/><stop offset="1" stop-color="#ff6600"/></linearGradient><linearGradient id="g113"><stop offset="0" stop-color="#00f2ff"/><stop offset="0.243" stop-color="#00fbff"/><stop offset="0.2523" stop-color="#1cfbff"/><stop offset="0.2804" stop-color="#44fcff"/><stop offset="0.352" stop-color="#86fffe"/><stop offset="0.4798" stop-color="#dbfff5"/><stop offset="0.5514" stop-color="#fffceb"/><stop offset="0.7165" stop-color="#ffb693"/><stop offset="0.9502" stop-color="#ff6f26"/><stop offset="0.9844" stop-color="#ff660b"/><stop offset="0.9907" stop-color="#ff6400"/><stop offset="1" stop-color="#ff6200"/></linearGradient><linearGradient id="g114"><stop offset="0" stop-color="#00f0ff"/><stop offset="0.2415" stop-color="#00f8ff"/><stop offset="0.2446" stop-color="#0ef8ff"/><stop offset="0.2601" stop-color="#2df9ff"/><stop offset="0.3096" stop-color="#63fbff"/><stop offset="0.4087" stop-color="#b2fffd"/><stop offset="0.5387" stop-color="#fffff2"/><stop offset="0.6997" stop-color="#ffb79b"/><stop offset="0.9257" stop-color="#ff7134"/><stop offset="0.9783" stop-color="#ff6313"/><stop offset="0.9907" stop-color="#ff6000"/><stop offset="1" stop-color="#ff5d00"/></linearGradient><linearGradient id="g115"><stop offset="0" stop-color="#00eeff"/><stop offset="0.24" stop-color="#02f5ff"/><stop offset="0.2431" stop-color="#10f5ff"/><stop offset="0.2615" stop-color="#32f6ff"/><stop offset="0.3169" stop-color="#6cf9ff"/><stop offset="0.4369" stop-color="#c9ffff"/><stop offset="0.5323" stop-color="#fffef6"/><stop offset="0.6892" stop-color="#ffb7a0"/><stop offset="0.9108" stop-color="#ff703c"/><stop offset="0.9785" stop-color="#ff5e13"/><stop offset="0.9877" stop-color="#ff5c08"/><stop offset="0.9908" stop-color="#ff5b00"/><stop offset="1" stop-color="#ff5900"/></linearGradient><linearGradient id="g116"><stop offset="0" stop-color="#00ecff"/><stop offset="0.2324" stop-color="#00f2ff"/><stop offset="0.2446" stop-color="#20f3ff"/><stop offset="0.2783" stop-color="#4bf4ff"/><stop offset="0.367" stop-color="#99f8ff"/><stop offset="0.4985" stop-color="#f4fffd"/><stop offset="0.526" stop-color="#fffbf7"/><stop offset="0.682" stop-color="#ffb4a2"/><stop offset="0.9021" stop-color="#ff6e3f"/><stop offset="0.9725" stop-color="#ff5b17"/><stop offset="0.9908" stop-color="#ff5600"/><stop offset="1" stop-color="#ff5400"/></linearGradient><linearGradient id="g117"><stop offset="0" stop-color="#00eaff"/><stop offset="0.231" stop-color="#00f0ff"/><stop offset="0.2401" stop-color="#1bf0ff"/><stop offset="0.2675" stop-color="#42f1ff"/><stop offset="0.3435" stop-color="#88f4ff"/><stop offset="0.4985" stop-color="#f6fdff"/><stop offset="0.5198" stop-color="#fffafa"/><stop offset="0.6717" stop-color="#ffb4a6"/><stop offset="0.8875" stop-color="#ff6d46"/><stop offset="0.9696" stop-color="#ff5719"/><stop offset="0.9878" stop-color="#ff5205"/><stop offset="0.9939" stop-color="#ff5000"/><stop offset="1" stop-color="#ff4f00"/></linearGradient><linearGradient id="g118"><stop offset="0" stop-color="#00e7ff"/><stop offset="0.2273" stop-color="#00edff"/><stop offset="0.2333" stop-color="#15edff"/><stop offset="0.2545" stop-color="#37eeff"/><stop offset="0.3182" stop-color="#76f0ff"/><stop offset="0.4606" stop-color="#dff7ff"/><stop offset="0.5121" stop-color="#fff9fe"/><stop offset="0.6636" stop-color="#ffb2aa"/><stop offset="0.8788" stop-color="#ff6b4a"/><stop offset="0.9697" stop-color="#ff521a"/><stop offset="0.9879" stop-color="#ff4d07"/><stop offset="0.9909" stop-color="#ff4c00"/><stop offset="1" stop-color="#ff4a00"/></linearGradient><linearGradient id="g119"><stop offset="0" stop-color="#00e5ff"/><stop offset="0.2259" stop-color="#00eaff"/><stop offset="0.2289" stop-color="#0feaff"/><stop offset="0.244" stop-color="#2cebff"/><stop offset="0.2922" stop-color="#61ecff"/><stop offset="0.4127" stop-color="#bff1ff"/><stop offset="0.512" stop-color="#fff4fd"/><stop offset="0.6627" stop-color="#ffaeaa"/><stop offset="0.8795" stop-color="#ff6649"/><stop offset="0.9699" stop-color="#ff4d1a"/><stop offset="0.988" stop-color="#ff4809"/><stop offset="0.991" stop-color="#ff4700"/><stop offset="1" stop-color="#ff4500"/></linearGradient><linearGradient id="g120"><stop offset="0" stop-color="#00e3ff"/><stop offset="0.2216" stop-color="#00e7ff"/><stop offset="0.2246" stop-color="#04e7ff"/><stop offset="0.2305" stop-color="#18e8ff"/><stop offset="0.2575" stop-color="#3fe8ff"/><stop offset="0.3323" stop-color="#84ebff"/><stop offset="0.488" stop-color="#f2f1ff"/><stop offset="0.515" stop-color="#ffeefb"/><stop offset="0.6647" stop-color="#ffa9a9"/><stop offset="0.8892" stop-color="#ff5f45"/><stop offset="0.9731" stop-color="#ff4719"/><stop offset="0.991" stop-color="#ff4204"/><stop offset="1" stop-color="#ff4000"/></linearGradient><linearGradient id="g121"><stop offset="0" stop-color="#00e1ff"/><stop offset="0.2173" stop-color="#00e5ff"/><stop offset="0.2292" stop-color="#1fe5ff"/><stop offset="0.2619" stop-color="#49e6ff"/><stop offset="0.3512" stop-color="#96e8ff"/><stop offset="0.503" stop-color="#feeeff"/><stop offset="0.6577" stop-color="#ffa6ab"/><stop offset="0.8839" stop-color="#ff5b47"/><stop offset="0.9702" stop-color="#ff4219"/><stop offset="0.9881" stop-color="#ff3d06"/><stop offset="0.994" stop-color="#ff3b00"/><stop offset="1" stop-color="#ff3900"/></linearGradient><linearGradient id="g122"><stop offset="0" stop-color="#00dfff"/><stop offset="0.216" stop-color="#00e2ff"/><stop offset="0.2249" stop-color="#1be2ff"/><stop offset="0.2544" stop-color="#43e3ff"/><stop offset="0.3373" stop-color="#8de5ff"/><stop offset="0.497" stop-color="#fbeaff"/><stop offset="0.5296" stop-color="#ffdcef"/><stop offset="0.6834" stop-color="#ff979e"/><stop offset="0.9527" stop-color="#ff4225"/><stop offset="0.9852" stop-color="#ff380c"/><stop offset="0.9911" stop-color="#ff3600"/><stop offset="1" stop-color="#ff3400"/></linearGradient><linearGradient id="g123"><stop offset="0" stop-color="#00ddff"/><stop offset="0.2124" stop-color="#00dfff"/><stop offset="0.2183" stop-color="#15dfff"/><stop offset="0.2419" stop-color="#3ae0ff"/><stop offset="0.3097" stop-color="#7ae1ff"/><stop offset="0.4602" stop-color="#e5e5ff"/><stop offset="0.5044" stop-color="#ffe4fd"/><stop offset="0.6519" stop-color="#ff9ead"/><stop offset="0.8879" stop-color="#ff5045"/><stop offset="0.9735" stop-color="#ff3618"/><stop offset="0.9882" stop-color="#ff3109"/><stop offset="0.9941" stop-color="#ff2f00"/><stop offset="1" stop-color="#ff2d00"/></linearGradient><linearGradient id="g124"><stop offset="0" stop-color="#00daff"/><stop offset="0.2111" stop-color="#00dcff"/><stop offset="0.2141" stop-color="#0fdcff"/><stop offset="0.2317" stop-color="#2fddff"/><stop offset="0.2874" stop-color="#68ddff"/><stop offset="0.4194" stop-color="#cbe0ff"/><stop offset="0.5044" stop-color="#ffdffc"/><stop offset="0.651" stop-color="#ff9aad"/><stop offset="0.8974" stop-color="#ff4841"/><stop offset="0.9765" stop-color="#ff2f16"/><stop offset="0.9941" stop-color="#ff2900"/><stop offset="1" stop-color="#ff2700"/></linearGradient><linearGradient id="g125"><stop offset="0" stop-color="#00d8ff"/><stop offset="0.207" stop-color="#00daff"/><stop offset="0.2187" stop-color="#1edaff"/><stop offset="0.2507" stop-color="#47daff"/><stop offset="0.3382" stop-color="#92dbff"/><stop offset="0.4985" stop-color="#ffddff"/><stop offset="0.6472" stop-color="#ff97af"/><stop offset="0.9096" stop-color="#ff3e3c"/><stop offset="0.9796" stop-color="#ff2714"/><stop offset="0.9913" stop-color="#ff2306"/><stop offset="0.9942" stop-color="#ff2100"/><stop offset="1" stop-color="#ff1f00"/></linearGradient><linearGradient id="g126"><stop offset="0" stop-color="#00d6ff"/><stop offset="0.2035" stop-color="#00d7ff"/><stop offset="0.2122" stop-color="#19d7ff"/><stop offset="0.2413" stop-color="#41d7ff"/><stop offset="0.3227" stop-color="#89d7ff"/><stop offset="0.4855" stop-color="#f8d9ff"/><stop offset="0.5058" stop-color="#ffd4fa"/><stop offset="0.6541" stop-color="#ff8fab"/><stop offset="0.9564" stop-color="#ff2824"/><stop offset="0.9884" stop-color="#ff1b0c"/><stop offset="0.9942" stop-color="#ff1900"/><stop offset="1" stop-color="#ff1600"/></linearGradient><linearGradient id="g127"><stop offset="0" stop-color="#00d4ff"/><stop offset="0.2017" stop-color="#00d4ff"/><stop offset="0.2104" stop-color="#1ad4ff"/><stop offset="0.2392" stop-color="#42d4ff"/><stop offset="0.3199" stop-color="#89d4ff"/><stop offset="0.4813" stop-color="#f7d5ff"/><stop offset="0.5014" stop-color="#ffd1fb"/><stop offset="0.6484" stop-color="#ff8cac"/><stop offset="0.9539" stop-color="#ff2125"/><stop offset="0.9885" stop-color="#ff0f09"/><stop offset="0.9942" stop-color="#ff0a00"/><stop offset="1" stop-color="#ff0200"/></linearGradient><linearGradient id="g128"><stop offset="0" stop-color="#00d1ff"/><stop offset="0.1983" stop-color="#00d1ff"/><stop offset="0.2011" stop-color="#0ed1ff"/><stop offset="0.2155" stop-color="#29d1ff"/><stop offset="0.2644" stop-color="#5ed1ff"/><stop offset="0.3851" stop-color="#bad1ff"/><stop offset="0.4943" stop-color="#ffcffe"/><stop offset="0.6379" stop-color="#ff8bb1"/><stop offset="0.9511" stop-color="#ff1927"/><stop offset="0.977" stop-color="#ff0716"/><stop offset="0.9828" stop-color="#ff0011"/><stop offset="0.9943" stop-color="#ff0000"/><stop offset="1" stop-color="#ff0000"/></linearGradient><linearGradient id="g129"><stop offset="0" stop-color="#00cfff"/><stop offset="0.1943" stop-color="#00ceff"/><stop offset="0.1971" stop-color="#03ceff"/><stop offset="0.2029" stop-color="#17ceff"/><stop offset="0.2286" stop-color="#3cceff"/><stop offset="0.3029" stop-color="#7fceff"/><stop offset="0.46" stop-color="#ecccff"/><stop offset="0.4971" stop-color="#ffc8fc"/><stop offset="0.6429" stop-color="#ff84ae"/><stop offset="0.9314" stop-color="#ff1931"/><stop offset="0.9571" stop-color="#ff0724"/><stop offset="0.96" stop-color="#ff0022"/><stop offset="0.9886" stop-color="#ff000b"/><stop offset="0.9943" stop-color="#ff0000"/><stop offset="1" stop-color="#ff0000"/></linearGradient><linearGradient id="g130"><stop offset="0" stop-color="#00cdff"/><stop offset="0.1909" stop-color="#00cbff"/><stop offset="0.2023" stop-color="#1dcbff"/><stop offset="0.2365" stop-color="#49cbff"/><stop offset="0.3276" stop-color="#95caff"/><stop offset="0.49" stop-color="#ffc6fe"/><stop offset="0.6353" stop-color="#ff81b1"/><stop offset="0.9117" stop-color="#ff193b"/><stop offset="0.9373" stop-color="#ff062e"/><stop offset="0.9402" stop-color="#ff002d"/><stop offset="0.9858" stop-color="#ff000f"/><stop offset="0.9915" stop-color="#ff0008"/><stop offset="0.9943" stop-color="#ff0000"/><stop offset="1" stop-color="#ff0000"/></linearGradient><linearGradient id="g131"><stop offset="0" stop-color="#00cbff"/><stop offset="0.1898" stop-color="#00c9ff"/><stop offset="0.1983" stop-color="#19c9ff"/><stop offset="0.2266" stop-color="#40c8ff"/><stop offset="0.3059" stop-color="#85c7ff"/><stop offset="0.4674" stop-color="#f2c3ff"/><stop offset="0.4929" stop-color="#ffc0fc"/><stop offset="0.6402" stop-color="#ff7aaf"/><stop offset="0.8924" stop-color="#ff1943"/><stop offset="0.9178" stop-color="#ff0638"/><stop offset="0.9235" stop-color="#ff0035"/><stop offset="0.983" stop-color="#ff0013"/><stop offset="0.9972" stop-color="#ff0000"/><stop offset="1" stop-color="#ff0000"/></linearGradient><linearGradient id="g132"><stop offset="0" stop-color="#00c8ff"/><stop offset="0.1859" stop-color="#00c6ff"/><stop offset="0.1915" stop-color="#14c6ff"/><stop offset="0.2141" stop-color="#37c5ff"/><stop offset="0.2817" stop-color="#76c4ff"/><stop offset="0.4338" stop-color="#e0c0ff"/><stop offset="0.4901" stop-color="#ffbbfc"/><stop offset="0.6394" stop-color="#ff74ae"/><stop offset="0.8704" stop-color="#ff1a4c"/><stop offset="0.8958" stop-color="#ff0641"/><stop offset="0.9014" stop-color="#ff003e"/><stop offset="0.9775" stop-color="#ff0016"/><stop offset="0.9915" stop-color="#ff0006"/><stop offset="0.9972" stop-color="#ff0000"/><stop offset="1" stop-color="#ff0000"/></linearGradient><linearGradient id="g133"><stop offset="0" stop-color="#00c6ff"/><stop offset="0.1849" stop-color="#00c3ff"/><stop offset="0.1877" stop-color="#0ec3ff"/><stop offset="0.2045" stop-color="#2dc3ff"/><stop offset="0.2577" stop-color="#63c1ff"/><stop offset="0.3866" stop-color="#c2bdff"/><stop offset="0.4874" stop-color="#ffb7fd"/><stop offset="0.6359" stop-color="#ff70af"/><stop offset="0.8515" stop-color="#ff1a54"/><stop offset="0.8768" stop-color="#ff0549"/><stop offset="0.8824" stop-color="#ff0047"/><stop offset="0.9748" stop-color="#ff0018"/><stop offset="0.9916" stop-color="#ff0007"/><stop offset="0.9944" stop-color="#ff0000"/><stop offset="1" stop-color="#ff0000"/></linearGradient><linearGradient id="g134"><stop offset="0" stop-color="#00c4ff"/><stop offset="0.1788" stop-color="#00c0ff"/><stop offset="0.1927" stop-color="#21c0ff"/><stop offset="0.2318" stop-color="#4fbfff"/><stop offset="0.3352" stop-color="#a1bbff"/><stop offset="0.4832" stop-color="#ffb3fe"/><stop offset="0.6313" stop-color="#ff6db1"/><stop offset="0.8324" stop-color="#ff1a5b"/><stop offset="0.8575" stop-color="#ff0551"/><stop offset="0.8631" stop-color="#ff004f"/><stop offset="0.9693" stop-color="#ff001c"/><stop offset="0.9916" stop-color="#ff0008"/><stop offset="0.9972" stop-color="#ff0000"/><stop offset="1" stop-color="#ff0000"/></linearGradient><linearGradient id="g135"><stop offset="0" stop-color="#00c1ff"/><stop offset="0.1778" stop-color="#00bdff"/><stop offset="0.1889" stop-color="#1dbdff"/><stop offset="0.2222" stop-color="#47bcff"/><stop offset="0.3139" stop-color="#93b9ff"/><stop offset="0.4806" stop-color="#ffafff"/><stop offset="0.6361" stop-color="#ff65ae"/><stop offset="0.8139" stop-color="#ff1a63"/><stop offset="0.8389" stop-color="#ff0459"/><stop offset="0.8472" stop-color="#ff0055"/><stop offset="0.9694" stop-color="#ff001d"/><stop offset="0.9917" stop-color="#ff0009"/><stop offset="0.9972" stop-color="#ff0000"/><stop offset="1" stop-color="#ff0000"/></linearGradient><linearGradient id="g136"><stop offset="0" stop-color="#00bfff"/><stop offset="0.1745" stop-color="#00baff"/><stop offset="0.1828" stop-color="#19baff"/><stop offset="0.2105" stop-color="#3fb9ff"/><stop offset="0.2909" stop-color="#84b6ff"/><stop offset="0.4571" stop-color="#f2acff"/><stop offset="0.4848" stop-color="#ffa7fc"/><stop offset="0.6427" stop-color="#ff5cab"/><stop offset="0.7978" stop-color="#ff1869"/><stop offset="0.8199" stop-color="#ff0460"/><stop offset="0.831" stop-color="#ff005c"/><stop offset="0.9668" stop-color="#ff001f"/><stop offset="0.9917" stop-color="#ff000a"/><stop offset="0.9972" stop-color="#ff0000"/><stop offset="1" stop-color="#ff0000"/></linearGradient><linearGradient id="g137"><stop offset="0" stop-color="#00bdff"/><stop offset="0.1731" stop-color="#00b8ff"/><stop offset="0.1786" stop-color="#14b7ff"/><stop offset="0.2033" stop-color="#39b6ff"/><stop offset="0.2747" stop-color="#79b3ff"/><stop offset="0.4313" stop-color="#e4a9ff"/><stop offset="0.4808" stop-color="#ffa3fd"/><stop offset="0.6401" stop-color="#ff57ab"/><stop offset="0.7775" stop-color="#ff1971"/><stop offset="0.7967" stop-color="#ff0869"/><stop offset="0.8049" stop-color="#ff0066"/><stop offset="0.9588" stop-color="#ff0022"/><stop offset="0.989" stop-color="#ff000b"/><stop offset="0.9945" stop-color="#ff0000"/><stop offset="1" stop-color="#ff0000"/></linearGradient><linearGradient id="g138"><stop offset="0" stop-color="#00baff"/><stop offset="0.1721" stop-color="#01b5ff"/><stop offset="0.1749" stop-color="#0fb5ff"/><stop offset="0.1913" stop-color="#2cb4ff"/><stop offset="0.2459" stop-color="#63b1ff"/><stop offset="0.377" stop-color="#c2a9ff"/><stop offset="0.4809" stop-color="#ff9dfc"/><stop offset="0.6475" stop-color="#ff4ea7"/><stop offset="0.7623" stop-color="#ff1777"/><stop offset="0.7787" stop-color="#ff0870"/><stop offset="0.7869" stop-color="#ff006d"/><stop offset="0.959" stop-color="#ff0023"/><stop offset="0.9918" stop-color="#ff0009"/><stop offset="0.9973" stop-color="#ff0000"/><stop offset="1" stop-color="#ff0000"/></linearGradient><linearGradient id="g139"><stop offset="0" stop-color="#00b8ff"/><stop offset="0.1662" stop-color="#00b2ff"/><stop offset="0.1771" stop-color="#1cb1ff"/><stop offset="0.2098" stop-color="#45b0ff"/><stop offset="0.2997" stop-color="#8fabff"/><stop offset="0.4714" stop-color="#fd9bff"/><stop offset="0.6757" stop-color="#ff3a9a"/><stop offset="0.7493" stop-color="#ff137c"/><stop offset="0.7602" stop-color="#ff0877"/><stop offset="0.7657" stop-color="#ff0075"/><stop offset="0.9564" stop-color="#ff0024"/><stop offset="0.9918" stop-color="#ff000a"/><stop offset="0.9973" stop-color="#ff0000"/><stop offset="1" stop-color="#ff0000"/></linearGradient><linearGradient id="g140"><stop offset="0" stop-color="#00b6ff"/><stop offset="0.1662" stop-color="#00afff"/><stop offset="0.1744" stop-color="#18afff"/><stop offset="0.2016" stop-color="#3dadff"/><stop offset="0.2807" stop-color="#81a8ff"/><stop offset="0.4469" stop-color="#ee99ff"/><stop offset="0.4823" stop-color="#ff91fb"/><stop offset="0.6649" stop-color="#ff3aa1"/><stop offset="0.7384" stop-color="#ff1182"/><stop offset="0.7466" stop-color="#ff087f"/><stop offset="0.7493" stop-color="#ff007d"/><stop offset="0.9619" stop-color="#ff0025"/><stop offset="0.9973" stop-color="#ff000b"/><stop offset="1" stop-color="#ff0006"/></linearGradient><linearGradient id="g141"><stop offset="0" stop-color="#00b3ff"/><stop offset="0.1657" stop-color="#00acff"/><stop offset="0.1713" stop-color="#13acff"/><stop offset="0.1934" stop-color="#34abff"/><stop offset="0.2597" stop-color="#70a6ff"/><stop offset="0.4144" stop-color="#d899ff"/><stop offset="0.4862" stop-color="#ff8dfd"/><stop offset="0.6713" stop-color="#ff34a2"/><stop offset="0.732" stop-color="#ff1189"/><stop offset="0.7403" stop-color="#ff0786"/><stop offset="0.7431" stop-color="#ff0085"/><stop offset="0.9779" stop-color="#ff0025"/><stop offset="1" stop-color="#ff0018"/></linearGradient><linearGradient id="g142"><stop offset="0" stop-color="#00b1ff"/><stop offset="0.1657" stop-color="#00a9ff"/><stop offset="0.1685" stop-color="#0da9ff"/><stop offset="0.1854" stop-color="#2ba8ff"/><stop offset="0.2416" stop-color="#61a4ff"/><stop offset="0.3792" stop-color="#bf99ff"/><stop offset="0.4944" stop-color="#ff87fc"/><stop offset="0.6854" stop-color="#ff2ba1"/><stop offset="0.7303" stop-color="#ff0e8f"/><stop offset="0.7388" stop-color="#ff008c"/><stop offset="0.9972" stop-color="#ff0025"/><stop offset="1" stop-color="#ff0024"/></linearGradient><linearGradient id="g143"><stop offset="0" stop-color="#00aeff"/><stop offset="0.1652" stop-color="#00a6ff"/><stop offset="0.1681" stop-color="#04a6ff"/><stop offset="0.1738" stop-color="#15a6ff"/><stop offset="0.1994" stop-color="#38a4ff"/><stop offset="0.2764" stop-color="#789fff"/><stop offset="0.4473" stop-color="#e38cff"/><stop offset="0.5043" stop-color="#ff81fc"/><stop offset="0.698" stop-color="#ff23a2"/><stop offset="0.7293" stop-color="#ff0b95"/><stop offset="0.735" stop-color="#ff0093"/><stop offset="1" stop-color="#ff002d"/></linearGradient><linearGradient id="g144"><stop offset="0" stop-color="#00acff"/><stop offset="0.1647" stop-color="#00a3ff"/><stop offset="0.1763" stop-color="#1ca3ff"/><stop offset="0.211" stop-color="#44a0ff"/><stop offset="0.3092" stop-color="#8d98ff"/><stop offset="0.5" stop-color="#fd7fff"/><stop offset="0.7023" stop-color="#ff1ca4"/><stop offset="0.7254" stop-color="#ff069b"/><stop offset="0.7283" stop-color="#ff009a"/><stop offset="1" stop-color="#ff0035"/></linearGradient><linearGradient id="g145"><stop offset="0" stop-color="#00a9ff"/><stop offset="0.1672" stop-color="#00a0ff"/><stop offset="0.176" stop-color="#18a0ff"/><stop offset="0.2082" stop-color="#3f9eff"/><stop offset="0.2991" stop-color="#8496ff"/><stop offset="0.4868" stop-color="#f17eff"/><stop offset="0.5191" stop-color="#ff76fc"/><stop offset="0.7009" stop-color="#ff1aaa"/><stop offset="0.7214" stop-color="#ff06a2"/><stop offset="0.7273" stop-color="#ff00a0"/><stop offset="1" stop-color="#ff003d"/></linearGradient><linearGradient id="g146"><stop offset="0" stop-color="#00a7ff"/><stop offset="0.1672" stop-color="#009dff"/><stop offset="0.1731" stop-color="#139dff"/><stop offset="0.2" stop-color="#369bff"/><stop offset="0.2806" stop-color="#7695ff"/><stop offset="0.4597" stop-color="#df7eff"/><stop offset="0.5284" stop-color="#ff6ffc"/><stop offset="0.6955" stop-color="#ff1ab2"/><stop offset="0.7164" stop-color="#ff05a9"/><stop offset="0.7224" stop-color="#ff00a7"/><stop offset="1" stop-color="#ff0045"/></linearGradient><linearGradient id="g147"><stop offset="0" stop-color="#00a4ff"/><stop offset="0.1692" stop-color="#009aff"/><stop offset="0.1722" stop-color="#0e9aff"/><stop offset="0.1903" stop-color="#2a99ff"/><stop offset="0.2508" stop-color="#5e94ff"/><stop offset="0.4018" stop-color="#bc83ff"/><stop offset="0.5347" stop-color="#ff6afd"/><stop offset="0.6888" stop-color="#ff1ab9"/><stop offset="0.71" stop-color="#ff05b1"/><stop offset="0.716" stop-color="#ff00ae"/><stop offset="1" stop-color="#ff004b"/></linearGradient><linearGradient id="g148"><stop offset="0" stop-color="#00a1ff"/><stop offset="0.1662" stop-color="#0098ff"/><stop offset="0.1815" stop-color="#1f96ff"/><stop offset="0.2277" stop-color="#4c93ff"/><stop offset="0.3508" stop-color="#9c86ff"/><stop offset="0.5354" stop-color="#fd66ff"/><stop offset="0.6831" stop-color="#ff1bc0"/><stop offset="0.7015" stop-color="#ff0ab9"/><stop offset="0.7077" stop-color="#ff00b7"/><stop offset="1" stop-color="#ff0052"/></linearGradient><linearGradient id="g149"><stop offset="0" stop-color="#009fff"/><stop offset="0.1688" stop-color="#0095ff"/><stop offset="0.1812" stop-color="#1c94ff"/><stop offset="0.2219" stop-color="#4590ff"/><stop offset="0.3344" stop-color="#8f85ff"/><stop offset="0.525" stop-color="#f365ff"/><stop offset="0.5563" stop-color="#ff5bfc"/><stop offset="0.6813" stop-color="#ff19c7"/><stop offset="0.6969" stop-color="#ff09c1"/><stop offset="0.7031" stop-color="#ff00be"/><stop offset="1" stop-color="#ff0059"/></linearGradient><linearGradient id="g150"><stop offset="0" stop-color="#009cff"/><stop offset="0.1688" stop-color="#0091ff"/><stop offset="0.1783" stop-color="#1891ff"/><stop offset="0.2134" stop-color="#3d8eff"/><stop offset="0.3153" stop-color="#8284ff"/><stop offset="0.5159" stop-color="#eb63ff"/><stop offset="0.5669" stop-color="#ff54fc"/><stop offset="0.6752" stop-color="#ff19ce"/><stop offset="0.6911" stop-color="#ff09c8"/><stop offset="0.6975" stop-color="#ff00c5"/><stop offset="1" stop-color="#ff0060"/></linearGradient><linearGradient id="g151"><stop offset="0" stop-color="#009aff"/><stop offset="0.171" stop-color="#008eff"/><stop offset="0.1774" stop-color="#138eff"/><stop offset="0.2065" stop-color="#358bff"/><stop offset="0.2935" stop-color="#7383ff"/><stop offset="0.4903" stop-color="#db65ff"/><stop offset="0.5742" stop-color="#ff4dfd"/><stop offset="0.671" stop-color="#ff17d4"/><stop offset="0.6839" stop-color="#ff09cf"/><stop offset="0.6871" stop-color="#ff00ce"/><stop offset="0.9742" stop-color="#ff006d"/><stop offset="1" stop-color="#ff0065"/></linearGradient><linearGradient id="g152"><stop offset="0" stop-color="#0097ff"/><stop offset="0.1711" stop-color="#038bff"/><stop offset="0.1776" stop-color="#148bff"/><stop offset="0.2105" stop-color="#3988ff"/><stop offset="0.3059" stop-color="#787eff"/><stop offset="0.5066" stop-color="#de5dff"/><stop offset="0.5855" stop-color="#ff45fc"/><stop offset="0.6645" stop-color="#ff17dc"/><stop offset="0.6776" stop-color="#ff09d7"/><stop offset="0.6809" stop-color="#ff00d6"/><stop offset="0.9605" stop-color="#ff0078"/><stop offset="1" stop-color="#ff006c"/></linearGradient><linearGradient id="g153"><stop offset="0" stop-color="#0094ff"/><stop offset="0.1678" stop-color="#0089ff"/><stop offset="0.1812" stop-color="#1a87ff"/><stop offset="0.2248" stop-color="#4383ff"/><stop offset="0.3456" stop-color="#8c76ff"/><stop offset="0.5268" stop-color="#e454ff"/><stop offset="0.5973" stop-color="#ff3cfc"/><stop offset="0.6611" stop-color="#ff14e2"/><stop offset="0.6711" stop-color="#ff08de"/><stop offset="0.6745" stop-color="#ff00dd"/><stop offset="0.9497" stop-color="#ff0081"/><stop offset="1" stop-color="#ff0072"/></linearGradient><linearGradient id="g154"><stop offset="0" stop-color="#0092ff"/><stop offset="0.1701" stop-color="#0085ff"/><stop offset="0.1803" stop-color="#1785ff"/><stop offset="0.2177" stop-color="#3c81ff"/><stop offset="0.3265" stop-color="#8075ff"/><stop offset="0.517" stop-color="#db52ff"/><stop offset="0.6054" stop-color="#ff34fd"/><stop offset="0.6565" stop-color="#ff11e9"/><stop offset="0.6667" stop-color="#ff00e5"/><stop offset="0.9388" stop-color="#ff008a"/><stop offset="1" stop-color="#ff0078"/></linearGradient><linearGradient id="g155"><stop offset="0" stop-color="#008fff"/><stop offset="0.1701" stop-color="#0082ff"/><stop offset="0.1771" stop-color="#1282ff"/><stop offset="0.2083" stop-color="#347fff"/><stop offset="0.3021" stop-color="#7074ff"/><stop offset="0.5" stop-color="#d052ff"/><stop offset="0.6042" stop-color="#fc30ff"/><stop offset="0.6493" stop-color="#ff11f0"/><stop offset="0.6597" stop-color="#ff00ec"/><stop offset="0.9306" stop-color="#ff0092"/><stop offset="1" stop-color="#ff007e"/></linearGradient><linearGradient id="g156"><stop offset="0" stop-color="#008cff"/><stop offset="0.1731" stop-color="#007fff"/><stop offset="0.1767" stop-color="#0d7fff"/><stop offset="0.1979" stop-color="#287dff"/><stop offset="0.2686" stop-color="#5b75ff"/><stop offset="0.4488" stop-color="#b55aff"/><stop offset="0.5795" stop-color="#ed36ff"/><stop offset="0.6325" stop-color="#ff1afc"/><stop offset="0.6502" stop-color="#ff07f5"/><stop offset="0.6537" stop-color="#ff00f4"/><stop offset="0.9258" stop-color="#ff009a"/><stop offset="1" stop-color="#ff0085"/></linearGradient><linearGradient id="g157"><stop offset="0" stop-color="#008aff"/><stop offset="0.1691" stop-color="#007cff"/><stop offset="0.1871" stop-color="#1e7bff"/><stop offset="0.241" stop-color="#4975ff"/><stop offset="0.3849" stop-color="#9662ff"/><stop offset="0.5432" stop-color="#db3eff"/><stop offset="0.6151" stop-color="#f71fff"/><stop offset="0.6367" stop-color="#ff0cff"/><stop offset="0.6439" stop-color="#ff00fc"/><stop offset="0.9173" stop-color="#ff00a1"/><stop offset="1" stop-color="#ff008a"/></linearGradient><linearGradient id="g158"><stop offset="0" stop-color="#0087ff"/><stop offset="0.1691" stop-color="#0079ff"/><stop offset="0.1838" stop-color="#1a78ff"/><stop offset="0.2316" stop-color="#4273ff"/><stop offset="0.364" stop-color="#8961ff"/><stop offset="0.5294" stop-color="#d13eff"/><stop offset="0.6066" stop-color="#ef1eff"/><stop offset="0.6287" stop-color="#f80cff"/><stop offset="0.636" stop-color="#fa00ff"/><stop offset="0.6765" stop-color="#ff00f5"/><stop offset="0.9632" stop-color="#ff009a"/><stop offset="1" stop-color="#ff0090"/></linearGradient><linearGradient id="g159"><stop offset="0" stop-color="#0084ff"/><stop offset="0.1723" stop-color="#0076ff"/><stop offset="0.1835" stop-color="#1775ff"/><stop offset="0.2247" stop-color="#3b70ff"/><stop offset="0.3446" stop-color="#7d61ff"/><stop offset="0.5169" stop-color="#c73eff"/><stop offset="0.5993" stop-color="#e71dff"/><stop offset="0.6217" stop-color="#f00bff"/><stop offset="0.6292" stop-color="#f300ff"/><stop offset="0.6742" stop-color="#ff00fb"/><stop offset="0.9625" stop-color="#ff00a1"/><stop offset="1" stop-color="#ff0097"/></linearGradient><linearGradient id="g160"><stop offset="0" stop-color="#0081ff"/><stop offset="0.1718" stop-color="#0073ff"/><stop offset="0.1794" stop-color="#1272ff"/><stop offset="0.2137" stop-color="#336eff"/><stop offset="0.3206" stop-color="#7061ff"/><stop offset="0.5038" stop-color="#bf3dff"/><stop offset="0.5878" stop-color="#df1dff"/><stop offset="0.6107" stop-color="#e80aff"/><stop offset="0.6183" stop-color="#eb00ff"/><stop offset="0.6832" stop-color="#ff00fc"/><stop offset="0.9771" stop-color="#ff00a2"/><stop offset="1" stop-color="#ff009c"/></linearGradient><linearGradient id="g161"><stop offset="0" stop-color="#007eff"/><stop offset="0.1719" stop-color="#016fff"/><stop offset="0.1758" stop-color="#0d6fff"/><stop offset="0.2031" stop-color="#2b6cff"/><stop offset="0.293" stop-color="#6161ff"/><stop offset="0.4844" stop-color="#b43eff"/><stop offset="0.5742" stop-color="#d61eff"/><stop offset="0.6016" stop-color="#e00aff"/><stop offset="0.6094" stop-color="#e300ff"/><stop offset="0.6953" stop-color="#ff00fd"/><stop offset="1" stop-color="#ff00a2"/></linearGradient><linearGradient id="g162"><stop offset="0" stop-color="#007bff"/><stop offset="0.1713" stop-color="#006cff"/><stop offset="0.1912" stop-color="#1e6aff"/><stop offset="0.251" stop-color="#4863ff"/><stop offset="0.4143" stop-color="#944aff"/><stop offset="0.5418" stop-color="#c528ff"/><stop offset="0.5896" stop-color="#d70eff"/><stop offset="0.5976" stop-color="#da00ff"/><stop offset="0.7131" stop-color="#ff00fd"/><stop offset="1" stop-color="#ff00a9"/></linearGradient><linearGradient id="g163"><stop offset="0" stop-color="#0078ff"/><stop offset="0.1707" stop-color="#0069ff"/><stop offset="0.187" stop-color="#1a67ff"/><stop offset="0.2439" stop-color="#4361ff"/><stop offset="0.3984" stop-color="#8b49ff"/><stop offset="0.5285" stop-color="#bd27ff"/><stop offset="0.5772" stop-color="#cf0dff"/><stop offset="0.5854" stop-color="#d200ff"/><stop offset="0.7276" stop-color="#ff00fc"/><stop offset="1" stop-color="#ff00ae"/></linearGradient><linearGradient id="g164"><stop offset="0" stop-color="#0075ff"/><stop offset="0.1708" stop-color="#0066ff"/><stop offset="0.1833" stop-color="#1764ff"/><stop offset="0.2333" stop-color="#3c5fff"/><stop offset="0.375" stop-color="#7f4aff"/><stop offset="0.5167" stop-color="#b527ff"/><stop offset="0.5667" stop-color="#c70dff"/><stop offset="0.575" stop-color="#ca00ff"/><stop offset="0.7417" stop-color="#ff00fd"/><stop offset="1" stop-color="#ff00b5"/></linearGradient><linearGradient id="g165"><stop offset="0" stop-color="#0072ff"/><stop offset="0.1709" stop-color="#0062ff"/><stop offset="0.1795" stop-color="#1261ff"/><stop offset="0.2222" stop-color="#355cff"/><stop offset="0.3504" stop-color="#734aff"/><stop offset="0.5" stop-color="#ac27ff"/><stop offset="0.5513" stop-color="#be10ff"/><stop offset="0.5641" stop-color="#c200ff"/><stop offset="0.7607" stop-color="#ff00fd"/><stop offset="1" stop-color="#ff00bb"/></linearGradient><linearGradient id="g166"><stop offset="0" stop-color="#006fff"/><stop offset="0.1696" stop-color="#005fff"/><stop offset="0.1739" stop-color="#035fff"/><stop offset="0.1826" stop-color="#145eff"/><stop offset="0.2261" stop-color="#3559ff"/><stop offset="0.3565" stop-color="#7345ff"/><stop offset="0.4957" stop-color="#a724ff"/><stop offset="0.5435" stop-color="#b70cff"/><stop offset="0.5522" stop-color="#ba00ff"/><stop offset="0.7783" stop-color="#ff00fc"/><stop offset="1" stop-color="#ff00c1"/></linearGradient><linearGradient id="g167"><stop offset="0" stop-color="#006cff"/><stop offset="0.1696" stop-color="#005cff"/><stop offset="0.1875" stop-color="#195aff"/><stop offset="0.2455" stop-color="#4052ff"/><stop offset="0.4107" stop-color="#8536ff"/><stop offset="0.5089" stop-color="#a819ff"/><stop offset="0.5357" stop-color="#b106ff"/><stop offset="0.5402" stop-color="#b200ff"/><stop offset="0.7946" stop-color="#ff00fd"/><stop offset="1" stop-color="#ff00c7"/></linearGradient><linearGradient id="g168"><stop offset="0" stop-color="#0068ff"/><stop offset="0.1697" stop-color="#0058ff"/><stop offset="0.1835" stop-color="#1656ff"/><stop offset="0.2385" stop-color="#3b50ff"/><stop offset="0.3945" stop-color="#7d36ff"/><stop offset="0.4954" stop-color="#a018ff"/><stop offset="0.5229" stop-color="#a905ff"/><stop offset="0.5321" stop-color="#ac00ff"/><stop offset="0.8165" stop-color="#ff00fd"/><stop offset="1" stop-color="#ff00ce"/></linearGradient><linearGradient id="g169"><stop offset="0" stop-color="#0065ff"/><stop offset="0.1698" stop-color="#0054ff"/><stop offset="0.1792" stop-color="#1153ff"/><stop offset="0.2217" stop-color="#314eff"/><stop offset="0.3538" stop-color="#6c3aff"/><stop offset="0.4764" stop-color="#961aff"/><stop offset="0.5094" stop-color="#a105ff"/><stop offset="0.5189" stop-color="#a400ff"/><stop offset="0.8349" stop-color="#ff00fe"/><stop offset="1" stop-color="#ff00d4"/></linearGradient><linearGradient id="g170"><stop offset="0" stop-color="#0062ff"/><stop offset="0.1731" stop-color="#0051ff"/><stop offset="0.1779" stop-color="#0c50ff"/><stop offset="0.2115" stop-color="#294cff"/><stop offset="0.3221" stop-color="#5d3bff"/><stop offset="0.4567" stop-color="#8d1bff"/><stop offset="0.4904" stop-color="#9809ff"/><stop offset="0.5" stop-color="#9b00ff"/><stop offset="0.851" stop-color="#ff00ff"/><stop offset="1" stop-color="#ff00da"/></linearGradient><linearGradient id="g171"><stop offset="0" stop-color="#005eff"/><stop offset="0.1683" stop-color="#004dff"/><stop offset="0.1931" stop-color="#1c4aff"/><stop offset="0.2723" stop-color="#473fff"/><stop offset="0.4257" stop-color="#801fff"/><stop offset="0.4752" stop-color="#9009ff"/><stop offset="0.4901" stop-color="#9400ff"/><stop offset="0.8713" stop-color="#fe00ff"/><stop offset="1" stop-color="#ff00e1"/></linearGradient><linearGradient id="g172"><stop offset="0" stop-color="#005bff"/><stop offset="0.1684" stop-color="#004aff"/><stop offset="0.1888" stop-color="#1947ff"/><stop offset="0.2602" stop-color="#413dff"/><stop offset="0.4133" stop-color="#791dff"/><stop offset="0.4592" stop-color="#8708ff"/><stop offset="0.4694" stop-color="#8b00ff"/><stop offset="0.8776" stop-color="#fa00ff"/><stop offset="0.9286" stop-color="#ff00f8"/><stop offset="1" stop-color="#ff00e7"/></linearGradient><linearGradient id="g173"><stop offset="0" stop-color="#0057ff"/><stop offset="0.1675" stop-color="#0046ff"/><stop offset="0.1832" stop-color="#1644ff"/><stop offset="0.2461" stop-color="#3a3bff"/><stop offset="0.3979" stop-color="#721bff"/><stop offset="0.4398" stop-color="#7f08ff"/><stop offset="0.445" stop-color="#8100ff"/><stop offset="0.8482" stop-color="#ee00ff"/><stop offset="0.9319" stop-color="#ff00fc"/><stop offset="1" stop-color="#ff00ed"/></linearGradient><linearGradient id="g174"><stop offset="0" stop-color="#0053ff"/><stop offset="0.1676" stop-color="#0041ff"/><stop offset="0.1784" stop-color="#1240ff"/><stop offset="0.2324" stop-color="#3338ff"/><stop offset="0.3838" stop-color="#6b19ff"/><stop offset="0.4216" stop-color="#7707ff"/><stop offset="0.427" stop-color="#7900ff"/><stop offset="0.8324" stop-color="#e400ff"/><stop offset="0.9622" stop-color="#ff00fc"/><stop offset="1" stop-color="#ff00f4"/></linearGradient><linearGradient id="g175"><stop offset="0" stop-color="#0050ff"/><stop offset="0.1722" stop-color="#023dff"/><stop offset="0.1833" stop-color="#133cff"/><stop offset="0.2389" stop-color="#3434ff"/><stop offset="0.3778" stop-color="#6615ff"/><stop offset="0.4056" stop-color="#6f07ff"/><stop offset="0.4111" stop-color="#7000ff"/><stop offset="0.8056" stop-color="#d700ff"/><stop offset="0.9889" stop-color="#ff00fd"/><stop offset="1" stop-color="#ff00fb"/></linearGradient><linearGradient id="g176"><stop offset="0" stop-color="#004cff"/><stop offset="0.1657" stop-color="#0039ff"/><stop offset="0.1943" stop-color="#1c35ff"/><stop offset="0.2857" stop-color="#4626ff"/><stop offset="0.3714" stop-color="#630eff"/><stop offset="0.3886" stop-color="#6800ff"/><stop offset="0.7714" stop-color="#cb00ff"/><stop offset="1" stop-color="#fe00ff"/></linearGradient><linearGradient id="g177"><stop offset="0" stop-color="#0048ff"/><stop offset="0.1657" stop-color="#0035ff"/><stop offset="0.1893" stop-color="#1931ff"/><stop offset="0.2722" stop-color="#4023ff"/><stop offset="0.355" stop-color="#5b0aff"/><stop offset="0.3669" stop-color="#5f00ff"/><stop offset="0.7337" stop-color="#bd00ff"/><stop offset="1" stop-color="#f700ff"/></linearGradient><linearGradient id="g178"><stop offset="0" stop-color="#0044ff"/><stop offset="0.1656" stop-color="#0030ff"/><stop offset="0.184" stop-color="#162dff"/><stop offset="0.2577" stop-color="#3920ff"/><stop offset="0.3313" stop-color="#520aff"/><stop offset="0.3436" stop-color="#5600ff"/><stop offset="0.6871" stop-color="#ad00ff"/><stop offset="1" stop-color="#f000ff"/></linearGradient><linearGradient id="g179"><stop offset="0" stop-color="#003fff"/><stop offset="0.1646" stop-color="#002bff"/><stop offset="0.1772" stop-color="#1229ff"/><stop offset="0.2405" stop-color="#321dff"/><stop offset="0.3038" stop-color="#4909ff"/><stop offset="0.3165" stop-color="#4d00ff"/><stop offset="0.6266" stop-color="#9c00ff"/><stop offset="1" stop-color="#ea00ff"/></linearGradient><linearGradient id="g180"><stop offset="0" stop-color="#003aff"/><stop offset="0.1579" stop-color="#0026ff"/><stop offset="0.1908" stop-color="#1b20ff"/><stop offset="0.2763" stop-color="#3e09ff"/><stop offset="0.2961" stop-color="#4500ff"/><stop offset="0.5855" stop-color="#8f00ff"/><stop offset="1" stop-color="#e300ff"/></linearGradient><linearGradient id="g181"><stop offset="0" stop-color="#0035ff"/><stop offset="0.1575" stop-color="#0020ff"/><stop offset="0.1849" stop-color="#181bff"/><stop offset="0.2466" stop-color="#3308ff"/><stop offset="0.2671" stop-color="#3a00ff"/><stop offset="0.5205" stop-color="#7c00ff"/><stop offset="1" stop-color="#dc00ff"/></linearGradient><linearGradient id="g182"><stop offset="0" stop-color="#0030ff"/><stop offset="0.156" stop-color="#0019ff"/><stop offset="0.1773" stop-color="#1514ff"/><stop offset="0.234" stop-color="#2f00ff"/><stop offset="0.4397" stop-color="#6700ff"/><stop offset="0.9291" stop-color="#ca00ff"/><stop offset="1" stop-color="#d700ff"/></linearGradient><linearGradient id="g183"><stop offset="0" stop-color="#002bff"/><stop offset="0.1618" stop-color="#0010ff"/><stop offset="0.1765" stop-color="#110bff"/><stop offset="0.1985" stop-color="#1d00ff"/><stop offset="0.3235" stop-color="#4700ff"/><stop offset="0.6691" stop-color="#9400ff"/><stop offset="1" stop-color="#d000ff"/></linearGradient><linearGradient id="g184"><stop offset="0" stop-color="#0025ff"/><stop offset="0.1308" stop-color="#000dff"/><stop offset="0.1538" stop-color="#0000ff"/><stop offset="0.1615" stop-color="#0000ff"/><stop offset="0.1692" stop-color="#0c00ff"/><stop offset="0.2231" stop-color="#2700ff"/><stop offset="0.4077" stop-color="#5a00ff"/><stop offset="0.8769" stop-color="#b400ff"/><stop offset="1" stop-color="#c900ff"/></linearGradient><linearGradient id="g185"><stop offset="0" stop-color="#001eff"/><stop offset="0.09677" stop-color="#000aff"/><stop offset="0.1129" stop-color="#0000ff"/><stop offset="0.1532" stop-color="#0000ff"/><stop offset="0.1935" stop-color="#1b00ff"/><stop offset="0.3226" stop-color="#4400ff"/><stop offset="0.6855" stop-color="#8d00ff"/><stop offset="1" stop-color="#c200ff"/></linearGradient><linearGradient id="g186"><stop offset="0" stop-color="#0016ff"/><stop offset="0.05882" stop-color="#0006ff"/><stop offset="0.06723" stop-color="#0000ff"/><stop offset="0.1513" stop-color="#0000ff"/><stop offset="0.1849" stop-color="#1800ff"/><stop offset="0.3025" stop-color="#3e00ff"/><stop offset="0.6387" stop-color="#8200ff"/><stop offset="1" stop-color="#bc00ff"/></linearGradient><linearGradient id="g187"><stop offset="0" stop-color="#0009ff"/><stop offset="0.0177" stop-color="#0000ff"/><stop offset="0.1504" stop-color="#0000ff"/><stop offset="0.177" stop-color="#1500ff"/><stop offset="0.292" stop-color="#3a00ff"/><stop offset="0.6283" stop-color="#7b00ff"/><stop offset="1" stop-color="#b500ff"/></linearGradient><linearGradient id="g188"><stop offset="0" stop-color="#0000ff"/><stop offset="0.1415" stop-color="#0000ff"/><stop offset="0.1604" stop-color="#1100ff"/><stop offset="0.2547" stop-color="#3100ff"/><stop offset="0.5472" stop-color="#6a00ff"/><stop offset="1" stop-color="#af00ff"/></linearGradient><linearGradient id="g189"><stop offset="0" stop-color="#0000ff"/><stop offset="0.1386" stop-color="#0300ff"/><stop offset="0.1683" stop-color="#1600ff"/><stop offset="0.3069" stop-color="#3c00ff"/><stop offset="0.703" stop-color="#8000ff"/><stop offset="1" stop-color="#a900ff"/></linearGradient><linearGradient id="g190"><stop offset="0" stop-color="#0000ff"/><stop offset="0.1263" stop-color="#0000ff"/><stop offset="0.1789" stop-color="#1b00ff"/><stop offset="0.3579" stop-color="#4500ff"/><stop offset="0.8526" stop-color="#8f00ff"/><stop offset="1" stop-color="#a200ff"/></linearGradient><linearGradient id="g191"><stop offset="0" stop-color="#0000ff"/><stop offset="0.1236" stop-color="#0000ff"/><stop offset="0.1685" stop-color="#1800ff"/><stop offset="0.3371" stop-color="#3f00ff"/><stop offset="0.809" stop-color="#8300ff"/><stop offset="1" stop-color="#9b00ff"/></linearGradient><linearGradient id="g192"><stop offset="0" stop-color="#0000ff"/><stop offset="0.119" stop-color="#0000ff"/><stop offset="0.1429" stop-color="#1000ff"/><stop offset="0.2619" stop-color="#3000ff"/><stop offset="0.631" stop-color="#6900ff"/><stop offset="1" stop-color="#9500ff"/></linearGradient><linearGradient id="g193"><stop offset="0" stop-color="#0000ff"/><stop offset="0.1039" stop-color="#0000ff"/><stop offset="0.1299" stop-color="#1100ff"/><stop offset="0.2727" stop-color="#3200ff"/><stop offset="0.7143" stop-color="#6f00ff"/><stop offset="1" stop-color="#8e00ff"/></linearGradient><linearGradient id="g194"><stop offset="0" stop-color="#0000ff"/><stop offset="0.08451" stop-color="#0000ff"/><stop offset="0.1549" stop-color="#1a00ff"/><stop offset="0.3944" stop-color="#4300ff"/><stop offset="1" stop-color="#8700ff"/></linearGradient><linearGradient id="g195"><stop offset="0" stop-color="#0000ff"/><stop offset="0.06154" stop-color="#0000ff"/><stop offset="0.1231" stop-color="#1700ff"/><stop offset="0.3538" stop-color="#3e00ff"/><stop offset="1" stop-color="#8100ff"/></linearGradient><linearGradient id="g196"><stop offset="0" stop-color="#0000ff"/><stop offset="0.05085" stop-color="#0000ff"/><stop offset="0.1017" stop-color="#1400ff"/><stop offset="0.322" stop-color="#3800ff"/><stop offset="0.9661" stop-color="#7700ff"/><stop offset="1" stop-color="#7a00ff"/></linearGradient><linearGradient id="g197"><stop offset="0" stop-color="#0000ff"/><stop offset="0.01923" stop-color="#0000ff"/><stop offset="0.05769" stop-color="#1000ff"/><stop offset="0.25" stop-color="#2f00ff"/><stop offset="0.8654" stop-color="#6800ff"/><stop offset="1" stop-color="#7300ff"/></linearGradient><linearGradient id="g198"><stop offset="0" stop-color="#0c00ff"/><stop offset="0.1739" stop-color="#2800ff"/><stop offset="0.7609" stop-color="#5c00ff"/><stop offset="1" stop-color="#6d00ff"/></linearGradient><linearGradient id="g199"><stop offset="0" stop-color="#1600ff"/><stop offset="0.3846" stop-color="#3d00ff"/><stop offset="1" stop-color="#6500ff"/></linearGradient><linearGradient id="g200"><stop offset="0" stop-color="#2100ff"/><stop offset="0.7097" stop-color="#4f00ff"/><stop offset="1" stop-color="#5e00ff"/></linearGradient><linearGradient id="g201"><stop offset="0" stop-color="#2700ff"/><stop offset="1" stop-color="#5700ff"/></linearGradient><linearGradient id="g202"><stop offset="0" stop-color="#2f00ff"/><stop offset="1" stop-color="#4f00ff"/></linearGradient><linearGradient id="g203"><stop offset="0" stop-color="#3300ff"/><stop offset="1" stop-color="#4700ff"/></linearGradient></defs>
<rect x="52" y="68" width="398" height="412.5" fill="#666"/>
<g clip-path="url(#lc)"><rect x="90" y="70" width="12" height="2.5" fill="url(#g0)"/><rect x="83" y="72" width="27" height="2.5" fill="url(#g1)"/><rect x="79" y="74" width="37" height="2.5" fill="url(#g2)"/><rect x="76" y="76" width="45" height="2.5" fill="url(#g3)"/><rect x="74" y="78" width="51" height="2.5" fill="url(#g4)"/><rect x="72" y="80" width="57" height="2.5" fill="url(#g5)"/><rect x="70" y="82" width="63" height="2.5" fill="url(#g6)"/><rect x="69" y="84" width="68" height="2.5" fill="url(#g7)"/><rect x="68" y="86" width="73" height="2.5" fill="url(#g8)"/><rect x="67" y="88" width="77" height="2.5" fill="url(#g9)"/><rect x="66" y="90" width="82" height="2.5" fill="url(#g10)"/><rect x="65" y="92" width="86" height="2.5" fill="url(#g11)"/><rect x="64" y="94" width="90" height="2.5" fill="url(#g12)"/><rect x="63" y="96" width="94" height="2.5" fill="url(#g13)"/><rect x="62" y="98" width="99" height="2.5" fill="url(#g14)"/><rect x="61" y="100" width="103" height="2.5" fill="url(#g15)"/><rect x="61" y="102" width="105" height="2.5" fill="url(#g16)"/><rect x="60" y="104" width="109" height="2.5" fill="url(#g17)"/><rect x="60" y="106" width="112" height="2.5" fill="url(#g18)"/><rect x="59" y="108" width="116" height="2.5" fill="url(#g19)"/><rect x="58" y="110" width="120" height="2.5" fill="url(#g20)"/><rect x="58" y="112" width="122" height="2.5" fill="url(#g21)"/><rect x="58" y="114" width="125" height="2.5" fill="url(#g22)"/><rect x="57" y="116" width="129" height="2.5" fill="url(#g23)"/><rect x="57" y="118" width="131" height="2.5" fill="url(#g24)"/><rect x="56" y="120" width="135" height="2.5" fill="url(#g25)"/><rect x="56" y="122" width="137" height="2.5" fill="url(#g26)"/><rect x="56" y="124" width="140" height="2.5" fill="url(#g27)"/><rect x="55" y="126" width="144" height="2.5" fill="url(#g28)"/><rect x="55" y="128" width="146" height="2.5" fill="url(#g29)"/><rect x="55" y="130" width="148" height="2.5" fill="url(#g30)"/><rect x="55" y="132" width="151" height="2.5" fill="url(#g31)"/><rect x="54" y="134" width="154" height="2.5" fill="url(#g32)"/><rect x="54" y="136" width="157" height="2.5" fill="url(#g33)"/><rect x="54" y="138" width="159" height="2.5" fill="url(#g34)"/><rect x="54" y="140" width="161" height="2.5" fill="url(#g35)"/><rect x="54" y="142" width="164" height="2.5" fill="url(#g36)"/><rect x="54" y="144" width="166" height="2.5" fill="url(#g37)"/><rect x="53" y="146" width="169" height="2.5" fill="url(#g38)"/><rect x="53" y="148" width="172" height="2.5" fill="url(#g39)"/><rect x="53" y="150" width="174" height="2.5" fill="url(#g40)"/><rect x="53" y="152" width="176" height="2.5" fill="url(#g41)"/><rect x="53" y="154" width="179" height="2.5" fill="url(#g42)"/><rect x="53" y="156" width="181" height="2.5" fill="url(#g43)"/><rect x="53" y="158" width="183" height="2.5" fill="url(#g44)"/><rect x="53" y="160" width="186" height="2.5" fill="url(#g45)"/><rect x="53" y="162" width="188" height="2.5" fill="url(#g46)"/><rect x="53" y="164" width="190" height="2.5" fill="url(#g47)"/><rect x="53" y="166" width="192" height="2.5" fill="url(#g48)"/><rect x="53" y="168" width="195" height="2.5" fill="url(#g49)"/><rect x="53" y="170" width="197" height="2.5" fill="url(#g50)"/><rect x="53" y="172" width="199" height="2.5" fill="url(#g51)"/><rect x="53" y="174" width="201" height="2.5" fill="url(#g52)"/><rect x="53" y="176" width="204" height="2.5" fill="url(#g53)"/><rect x="53" y="178" width="206" height="2.5" fill="url(#g54)"/><rect x="53" y="180" width="208" height="2.5" fill="url(#g55)"/><rect x="53" y="182" width="210" height="2.5" fill="url(#g56)"/><rect x="53" y="184" width="212" height="2.5" fill="url(#g57)"/><rect x="53" y="186" width="215" height="2.5" fill="url(#g58)"/><rect x="53" y="188" width="217" height="2.5" fill="url(#g59)"/><rect x="53" y="190" width="219" height="2.5" fill="url(#g60)"/><rect x="53" y="192" width="221" height="2.5" fill="url(#g61)"/><rect x="54" y="194" width="223" height="2.5" fill="url(#g62)"/><rect x="54" y="196" width="225" height="2.5" fill="url(#g63)"/><rect x="54" y="198" width="227" height="2.5" fill="url(#g64)"/><rect x="54" y="200" width="229" height="2.5" fill="url(#g65)"/><rect x="54" y="202" width="231" height="2.5" fill="url(#g66)"/><rect x="54" y="204" width="234" height="2.5" fill="url(#g67)"/><rect x="54" y="206" width="236" height="2.5" fill="url(#g68)"/><rect x="54" y="208" width="238" height="2.5" fill="url(#g69)"/><rect x="55" y="210" width="239" height="2.5" fill="url(#g70)"/><rect x="55" y="212" width="241" height="2.5" fill="url(#g71)"/><rect x="55" y="214" width="244" height="2.5" fill="url(#g72)"/><rect x="55" y="216" width="246" height="2.5" fill="url(#g73)"/><rect x="55" y="218" width="248" height="2.5" fill="url(#g74)"/><rect x="56" y="220" width="249" height="2.5" fill="url(#g75)"/><rect x="56" y="222" width="251" height="2.5" fill="url(#g76)"/><rect x="56" y="224" width="253" height="2.5" fill="url(#g77)"/><rect x="56" y="226" width="256" height="2.5" fill="url(#g78)"/><rect x="56" y="228" width="258" height="2.5" fill="url(#g79)"/><rect x="57" y="230" width="259" height="2.5" fill="url(#g80)"/><rect x="57" y="232" width="261" height="2.5" fill="url(#g81)"/><rect x="57" y="234" width="263" height="2.5" fill="url(#g82)"/><rect x="57" y="236" width="266" height="2.5" fill="url(#g83)"/><rect x="57" y="238" width="268" height="2.5" fill="url(#g84)"/><rect x="58" y="240" width="269" height="2.5" fill="url(#g85)"/><rect x="58" y="242" width="271" height="2.5" fill="url(#g86)"/><rect x="58" y="244" width="273" height="2.5" fill="url(#g87)"/><rect x="59" y="246" width="274" height="2.5" fill="url(#g88)"/><rect x="59" y="248" width="277" height="2.5" fill="url(#g89)"/><rect x="59" y="250" width="279" height="2.5" fill="url(#g90)"/><rect x="59" y="252" width="281" height="2.5" fill="url(#g91)"/><rect x="60" y="254" width="282" height="2.5" fill="url(#g92)"/><rect x="60" y="256" width="284" height="2.5" fill="url(#g93)"/><rect x="60" y="258" width="287" height="2.5" fill="url(#g94)"/><rect x="60" y="260" width="289" height="2.5" fill="url(#g95)"/><rect x="61" y="262" width="290" height="2.5" fill="url(#g96)"/><rect x="61" y="264" width="292" height="2.5" fill="url(#g97)"/><rect x="61" y="266" width="294" height="2.5" fill="url(#g98)"/><rect x="62" y="268" width="296" height="2.5" fill="url(#g99)"/><rect x="62" y="270" width="298" height="2.5" fill="url(#g100)"/><rect x="62" y="272" width="300" height="2.5" fill="url(#g101)"/><rect x="63" y="274" width="301" height="2.5" fill="url(#g102)"/><rect x="63" y="276" width="303" height="2.5" fill="url(#g103)"/><rect x="63" y="278" width="305" height="2.5" fill="url(#g104)"/><rect x="64" y="280" width="307" height="2.5" fill="url(#g105)"/><rect x="64" y="282" width="309" height="2.5" fill="url(#g106)"/><rect x="64" y="284" width="311" height="2.5" fill="url(#g107)"/><rect x="65" y="286" width="312" height="2.5" fill="url(#g108)"/><rect x="65" y="288" width="314" height="2.5" fill="url(#g109)"/><rect x="65" y="290" width="316" height="2.5" fill="url(#g110)"/><rect x="66" y="292" width="318" height="2.5" fill="url(#g111)"/><rect x="66" y="294" width="320" height="2.5" fill="url(#g112)"/><rect x="67" y="296" width="321" height="2.5" fill="url(#g113)"/><rect x="67" y="298" width="323" height="2.5" fill="url(#g114)"/><rect x="67" y="300" width="325" height="2.5" fill="url(#g115)"/><rect x="68" y="302" width="327" height="2.5" fill="url(#g116)"/><rect x="68" y="304" width="329" height="2.5" fill="url(#g117)"/><rect x="69" y="306" width="330" height="2.5" fill="url(#g118)"/><rect x="69" y="308" width="332" height="2.5" fill="url(#g119)"/><rect x="69" y="310" width="334" height="2.5" fill="url(#g120)"/><rect x="70" y="312" width="336" height="2.5" fill="url(#g121)"/><rect x="70" y="314" width="338" height="2.5" fill="url(#g122)"/><rect x="71" y="316" width="339" height="2.5" fill="url(#g123)"/><rect x="71" y="318" width="341" height="2.5" fill="url(#g124)"/><rect x="71" y="320" width="343" height="2.5" fill="url(#g125)"/><rect x="72" y="322" width="344" height="2.5" fill="url(#g126)"/><rect x="72" y="324" width="347" height="2.5" fill="url(#g127)"/><rect x="73" y="326" width="348" height="2.5" fill="url(#g128)"/><rect x="73" y="328" width="350" height="2.5" fill="url(#g129)"/><rect x="74" y="330" width="351" height="2.5" fill="url(#g130)"/><rect x="74" y="332" width="353" height="2.5" fill="url(#g131)"/><rect x="75" y="334" width="355" height="2.5" fill="url(#g132)"/><rect x="75" y="336" width="357" height="2.5" fill="url(#g133)"/><rect x="76" y="338" width="358" height="2.5" fill="url(#g134)"/><rect x="76" y="340" width="360" height="2.5" fill="url(#g135)"/><rect x="77" y="342" width="361" height="2.5" fill="url(#g136)"/><rect x="77" y="344" width="364" height="2.5" fill="url(#g137)"/><rect x="77" y="346" width="366" height="2.5" fill="url(#g138)"/><rect x="78" y="348" width="367" height="2.5" fill="url(#g139)"/><rect x="78" y="350" width="367" height="2.5" fill="url(#g140)"/><rect x="79" y="352" width="362" height="2.5" fill="url(#g141)"/><rect x="80" y="354" width="356" height="2.5" fill="url(#g142)"/><rect x="80" y="356" width="351" height="2.5" fill="url(#g143)"/><rect x="81" y="358" width="346" height="2.5" fill="url(#g144)"/><rect x="81" y="360" width="341" height="2.5" fill="url(#g145)"/><rect x="82" y="362" width="335" height="2.5" fill="url(#g146)"/><rect x="82" y="364" width="331" height="2.5" fill="url(#g147)"/><rect x="83" y="366" width="325" height="2.5" fill="url(#g148)"/><rect x="83" y="368" width="320" height="2.5" fill="url(#g149)"/><rect x="84" y="370" width="314" height="2.5" fill="url(#g150)"/><rect x="84" y="372" width="310" height="2.5" fill="url(#g151)"/><rect x="85" y="374" width="304" height="2.5" fill="url(#g152)"/><rect x="86" y="376" width="298" height="2.5" fill="url(#g153)"/><rect x="86" y="378" width="294" height="2.5" fill="url(#g154)"/><rect x="87" y="380" width="288" height="2.5" fill="url(#g155)"/><rect x="87" y="382" width="283" height="2.5" fill="url(#g156)"/><rect x="88" y="384" width="278" height="2.5" fill="url(#g157)"/><rect x="89" y="386" width="272" height="2.5" fill="url(#g158)"/><rect x="89" y="388" width="267" height="2.5" fill="url(#g159)"/><rect x="90" y="390" width="262" height="2.5" fill="url(#g160)"/><rect x="91" y="392" width="256" height="2.5" fill="url(#g161)"/><rect x="91" y="394" width="251" height="2.5" fill="url(#g162)"/><rect x="92" y="396" width="246" height="2.5" fill="url(#g163)"/><rect x="93" y="398" width="240" height="2.5" fill="url(#g164)"/><rect x="94" y="400" width="234" height="2.5" fill="url(#g165)"/><rect x="94" y="402" width="230" height="2.5" fill="url(#g166)"/><rect x="95" y="404" width="224" height="2.5" fill="url(#g167)"/><rect x="96" y="406" width="218" height="2.5" fill="url(#g168)"/><rect x="97" y="408" width="212" height="2.5" fill="url(#g169)"/><rect x="97" y="410" width="208" height="2.5" fill="url(#g170)"/><rect x="98" y="412" width="202" height="2.5" fill="url(#g171)"/><rect x="99" y="414" width="196" height="2.5" fill="url(#g172)"/><rect x="100" y="416" width="191" height="2.5" fill="url(#g173)"/><rect x="101" y="418" width="185" height="2.5" fill="url(#g174)"/><rect x="101" y="420" width="180" height="2.5" fill="url(#g175)"/><rect x="102" y="422" width="175" height="2.5" fill="url(#g176)"/><rect x="103" y="424" width="169" height="2.5" fill="url(#g177)"/><rect x="104" y="426" width="163" height="2.5" fill="url(#g178)"/><rect x="105" y="428" width="158" height="2.5" fill="url(#g179)"/><rect x="106" y="430" width="152" height="2.5" fill="url(#g180)"/><rect x="107" y="432" width="146" height="2.5" fill="url(#g181)"/><rect x="108" y="434" width="141" height="2.5" fill="url(#g182)"/><rect x="108" y="436" width="136" height="2.5" fill="url(#g183)"/><rect x="109" y="438" width="130" height="2.5" fill="url(#g184)"/><rect x="110" y="440" width="124" height="2.5" fill="url(#g185)"/><rect x="111" y="442" width="119" height="2.5" fill="url(#g186)"/><rect x="112" y="444" width="113" height="2.5" fill="url(#g187)"/><rect x="114" y="446" width="106" height="2.5" fill="url(#g188)"/><rect x="115" y="448" width="101" height="2.5" fill="url(#g189)"/><rect x="116" y="450" width="95" height="2.5" fill="url(#g190)"/><rect x="117" y="452" width="89" height="2.5" fill="url(#g191)"/><rect x="118" y="454" width="84" height="2.5" fill="url(#g192)"/><rect x="120" y="456" width="77" height="2.5" fill="url(#g193)"/><rect x="121" y="458" width="71" height="2.5" fill="url(#g194)"/><rect x="123" y="460" width="65" height="2.5" fill="url(#g195)"/><rect x="124" y="462" width="59" height="2.5" fill="url(#g196)"/><rect x="126" y="464" width="52" height="2.5" fill="url(#g197)"/><rect x="128" y="466" width="46" height="2.5" fill="url(#g198)"/><rect x="130" y="468" width="39" height="2.5" fill="url(#g199)"/><rect x="133" y="470" width="31" height="2.5" fill="url(#g200)"/><rect x="135" y="472" width="25" height="2.5" fill="url(#g201)"/><rect x="138" y="474" width="17" height="2.5" fill="url(#g202)"/><rect x="140" y="476" width="10" height="2.5" fill="url(#g203)"/></g>
<polygon points="145.0,477.6 145.0,477.6 144.9,477.6 144.8,477.6 144.7,477.6 144.6,477.7 144.4,477.6 144.2,477.6 144.0,477.6 143.8,477.6 143.6,477.5 143.3,477.4 143.1,477.3 142.9,477.1 142.6,476.9 142.2,476.6 141.8,476.3 141.3,475.9 140.8,475.5 140.3,475.0 139.8,474.7 139.5,474.4 139.1,474.1 138.8,473.8 138.5,473.6 138.1,473.2 137.7,472.9 137.2,472.5 136.7,472.2 136.2,471.8 135.7,471.3 135.1,470.9 134.6,470.4 134.0,470.0 133.4,469.4 132.7,468.9 132.0,468.3 131.3,467.7 130.6,467.0 129.8,466.3 129.0,465.5 128.2,464.6 127.3,463.8 126.4,462.8 125.5,461.7 124.5,460.5 123.4,459.0 122.2,457.5 121.0,455.8 119.7,453.9 118.4,451.7 117.0,449.3 115.5,446.8 114.0,444.0 112.4,441.0 110.7,437.5 108.9,433.7 107.0,429.6 105.1,425.2 103.0,420.4 100.9,415.0 98.7,409.3 96.3,403.1 93.8,396.5 91.4,389.4 88.9,381.8 86.4,373.5 83.9,364.8 81.4,355.5 78.9,345.8 76.5,335.6 74.0,324.9 71.6,313.6 69.2,301.9 66.9,289.9 64.8,278.0 62.9,265.9 61.0,253.4 59.3,240.9 57.9,228.5 56.7,216.5 55.7,204.6 55.0,192.8 54.5,181.3 54.3,170.1 54.4,159.5 54.8,149.2 55.6,139.3 56.6,129.8 58.0,120.9 59.7,112.8 61.8,105.4 64.2,98.6 66.9,92.4 69.9,87.1 73.0,82.5 76.4,78.9 80.0,76.2 83.9,74.1 87.9,72.8 91.9,71.9 96.0,71.6 100.2,72.0 104.5,72.9 108.8,74.2 113.1,75.6 117.4,77.1 121.8,79.0 126.1,81.1 130.4,83.3 134.7,85.5 138.8,87.7 142.9,90.1 147.0,92.4 151.0,94.9 155.0,97.4 159.0,100.0 162.9,102.6 166.8,105.3 170.7,108.0 174.6,110.8 178.4,113.6 182.3,116.5 186.2,119.4 190.0,122.4 193.8,125.5 197.7,128.5 201.5,131.6 205.3,134.8 209.1,137.9 212.9,141.1 216.7,144.3 220.5,147.6 224.3,150.9 228.1,154.2 231.9,157.5 235.7,160.8 239.5,164.2 243.4,167.5 247.2,170.9 251.0,174.3 254.8,177.7 258.6,181.1 262.4,184.5 266.1,188.0 269.9,191.4 273.7,194.8 277.5,198.2 281.3,201.7 285.0,205.1 288.8,208.5 292.5,211.9 296.2,215.3 299.9,218.6 303.6,222.0 307.3,225.4 310.9,228.7 314.5,232.0 318.1,235.3 321.7,238.6 325.2,241.8 328.7,245.0 332.2,248.2 335.6,251.4 339.0,254.5 342.4,257.6 345.7,260.6 349.0,263.6 352.3,266.6 355.5,269.5 358.6,272.4 361.7,275.2 364.7,278.0 367.7,280.7 370.5,283.3 373.3,285.9 376.1,288.4 378.7,290.8 381.2,293.2 383.7,295.4 386.2,297.7 388.6,299.8 390.9,302.0 393.2,304.1 395.4,306.1 397.5,308.0 399.5,309.8 401.4,311.6 403.3,313.3 405.1,314.9 406.8,316.5 408.5,318.0 410.1,319.5 411.6,320.9 413.1,322.2 414.5,323.5 415.7,324.7 416.9,325.7 418.0,326.8 419.2,327.8 420.5,329.1 422.1,330.6 424.0,332.2 425.8,333.9 427.6,335.6 429.3,337.1 430.7,338.3 431.9,339.5 433.1,340.6 434.2,341.6 435.2,342.5 436.1,343.3 436.9,344.1 437.6,344.7 438.3,345.3 438.9,345.9 439.4,346.4 439.9,346.8 440.3,347.1 440.6,347.5 441.0,347.8 441.4,348.2 441.8,348.6 442.2,348.9 442.6,349.2 442.8,349.5 443.1,349.7 443.2,349.9 443.4,350.0 443.5,350.1 443.5,350.1" fill="none" stroke="#1c1c1c" stroke-width="1.3" stroke-linejoin="round"/>
<path d="M102.5 431.1h6M105.5 428.1v6" stroke="#8a8a8a" stroke-width="1" fill="none" opacity=".9"/><path d="M102.5 382.1h6M105.5 379.1v6" stroke="#b6b6b6" stroke-width="1" fill="none" opacity=".9"/><path d="M102.5 333.1h6M105.5 330.1v6" stroke="#b6b6b6" stroke-width="1" fill="none" opacity=".9"/><path d="M102.5 284.2h6M105.5 281.2v6" stroke="#b6b6b6" stroke-width="1" fill="none" opacity=".9"/><path d="M102.5 235.2h6M105.5 232.2v6" stroke="#b6b6b6" stroke-width="1" fill="none" opacity=".9"/><path d="M102.5 186.3h6M105.5 183.3v6" stroke="#b6b6b6" stroke-width="1" fill="none" opacity=".9"/><path d="M102.5 137.4h6M105.5 134.4v6" stroke="#b6b6b6" stroke-width="1" fill="none" opacity=".9"/><path d="M102.5 88.4h6M105.5 85.4v6" stroke="#b6b6b6" stroke-width="1" fill="none" opacity=".9"/><path d="M155.8 431.1h6M158.8 428.1v6" stroke="#b6b6b6" stroke-width="1" fill="none" opacity=".9"/><path d="M155.8 382.1h6M158.8 379.1v6" stroke="#b6b6b6" stroke-width="1" fill="none" opacity=".9"/><path d="M155.8 333.1h6M158.8 330.1v6" stroke="#b6b6b6" stroke-width="1" fill="none" opacity=".9"/><path d="M155.8 284.2h6M158.8 281.2v6" stroke="#b6b6b6" stroke-width="1" fill="none" opacity=".9"/><path d="M155.8 235.2h6M158.8 232.2v6" stroke="#b6b6b6" stroke-width="1" fill="none" opacity=".9"/><path d="M155.8 186.3h6M158.8 183.3v6" stroke="#b6b6b6" stroke-width="1" fill="none" opacity=".9"/><path d="M155.8 137.4h6M158.8 134.4v6" stroke="#b6b6b6" stroke-width="1" fill="none" opacity=".9"/><path d="M155.8 88.4h6M158.8 85.4v6" stroke="#8a8a8a" stroke-width="1" fill="none" opacity=".9"/><path d="M209.1 431.1h6M212.1 428.1v6" stroke="#b6b6b6" stroke-width="1" fill="none" opacity=".9"/><path d="M209.1 382.1h6M212.1 379.1v6" stroke="#b6b6b6" stroke-width="1" fill="none" opacity=".9"/><path d="M209.1 333.1h6M212.1 330.1v6" stroke="#b6b6b6" stroke-width="1" fill="none" opacity=".9"/><path d="M209.1 284.2h6M212.1 281.2v6" stroke="#b6b6b6" stroke-width="1" fill="none" opacity=".9"/><path d="M209.1 235.2h6M212.1 232.2v6" stroke="#b6b6b6" stroke-width="1" fill="none" opacity=".9"/><path d="M209.1 186.3h6M212.1 183.3v6" stroke="#b6b6b6" stroke-width="1" fill="none" opacity=".9"/><path d="M209.1 137.4h6M212.1 134.4v6" stroke="#8a8a8a" stroke-width="1" fill="none" opacity=".9"/><path d="M262.3 431.1h6M265.3 428.1v6" stroke="#8a8a8a" stroke-width="1" fill="none" opacity=".9"/><path d="M262.3 382.1h6M265.3 379.1v6" stroke="#b6b6b6" stroke-width="1" fill="none" opacity=".9"/><path d="M262.3 333.1h6M265.3 330.1v6" stroke="#b6b6b6" stroke-width="1" fill="none" opacity=".9"/><path d="M262.3 284.2h6M265.3 281.2v6" stroke="#b6b6b6" stroke-width="1" fill="none" opacity=".9"/><path d="M262.3 235.2h6M265.3 232.2v6" stroke="#b6b6b6" stroke-width="1" fill="none" opacity=".9"/><path d="M315.6 382.1h6M318.6 379.1v6" stroke="#b6b6b6" stroke-width="1" fill="none" opacity=".9"/><path d="M315.6 333.1h6M318.6 330.1v6" stroke="#b6b6b6" stroke-width="1" fill="none" opacity=".9"/><path d="M315.6 284.2h6M318.6 281.2v6" stroke="#b6b6b6" stroke-width="1" fill="none" opacity=".9"/><path d="M315.6 235.2h6M318.6 232.2v6" stroke="#8a8a8a" stroke-width="1" fill="none" opacity=".9"/><path d="M368.8 333.1h6M371.8 330.1v6" stroke="#b6b6b6" stroke-width="1" fill="none" opacity=".9"/>
<path d="M52.3 480.5v-5.2M52.3 68v5M105.5 480.5v-5.2M105.5 68v5M158.8 480.5v-5.2M158.8 68v5M212.1 480.5v-5.2M212.1 68v5M265.3 480.5v-5.2M265.3 68v5M318.6 480.5v-5.2M318.6 68v5M371.8 480.5v-5.2M371.8 68v5M425.1 480.5v-5.2M425.1 68v5M52 480.0h5M450 480.0h-5M52 431.1h5M450 431.1h-5M52 382.1h5M450 382.1h-5M52 333.1h5M450 333.1h-5M52 284.2h5M450 284.2h-5M52 235.2h5M450 235.2h-5M52 186.3h5M450 186.3h-5M52 137.4h5M450 137.4h-5M52 88.4h5M450 88.4h-5" stroke="#000" stroke-width="1" fill="none"/>
<path d="M52.5 67.5V480.5M52 480H450.5" stroke="#000" stroke-width="1.4" fill="none"/>
<path d="M52 68H450M449.6 68V480.5" stroke="#000" stroke-width="1.6" fill="none"/>
<polygon points="132.7,374.0 134.5,368.3 148.1,354.2 162.1,340.1 162.9,332.5 164.7,318.1 166.1,301.7 167.9,289.0 172.4,274.6 177.8,260.1 182.4,251.1 187.8,244.8 198.6,238.5 209.4,234.0 220.3,230.9 231.1,228.9 242.0,228.0 250.0,228.0 260.8,229.4 271.7,233.1 282.5,237.0 293.3,241.2 304.2,245.7 313.2,252.0 322.2,259.2 331.3,267.4 340.3,277.3 347.5,286.3 353.8,295.4 358.3,303.5 361.6,311.6 362.9,319.7 362.9,326.2 355.6,332.5 347.5,338.8 338.5,345.1 329.5,350.6 322.2,354.2 315.0,356.5 307.8,357.4 300.6,356.9 293.3,354.7 288.8,352.7 283.4,354.2 277.1,358.1 268.1,361.9 259.0,365.9 250.0,369.2 245.6,372.2 234.7,378.6 223.9,383.1 209.5,388.5 195.0,392.1 180.6,395.7 167.9,399.3 157.1,400.6 148.1,400.2 143.5,397.5 139.0,391.2 135.4,382.2" fill="none" stroke="#000" stroke-width="2" stroke-linejoin="round"/>
<polyline points="134.5,368.3 135.1,359.6 136.3,345.1 138.1,330.7 141.7,316.3 148.0,303.5 153.5,294.4 158.9,284.5 166.1,272.8 173.3,262.8 179.7,253.8 183.4,249.6 188.5,243.8 199.0,237.3 209.8,232.9 220.6,229.8 231.3,227.9 242.0,227.2 250.0,227.4 261.0,229.2 272.2,232.1 283.0,236.0 293.8,240.2 304.8,244.7 314.0,251.0 323.0,258.2 332.2,266.5 341.2,276.5 348.4,285.6 354.7,294.7 359.2,303.0 362.2,311.6 362.6,320.8 360.1,325.3 352.9,332.1 343.9,338.8 335.0,344.8 327.0,349.8 321.0,353.2 311.4,357.4 300.6,360.5 289.7,363.6 278.9,366.8 268.1,370.1 259.0,372.2 250.0,374.4 245.6,375.8 234.7,379.4 223.9,383.6 209.5,389.0 195.0,392.6 180.6,396.2 167.9,399.8 157.1,401.1 148.1,400.7 143.2,398.0 138.6,391.4 135.0,382.4 132.3,374.0" fill="none" stroke="#000" stroke-width="1.5" stroke-dasharray="1.6 2.6"/>
<path d="M258.2 291.8l2.3 2.3l-2.3 2.3l-2.3-2.3z" fill="#4a4a4a"/><rect x="264.3" y="305.8" width="1.2" height="1.2" fill="#555"/>
<g font-family="Liberation Sans, sans-serif" font-size="11.5"><circle cx="144.6" cy="477.7" r="3.4" fill="#2a14b0" stroke="#a8a8e6" stroke-width="0.7"/><text x="133.6" y="477.2" fill="#dcdcdc" text-anchor="end">400</text><circle cx="118.4" cy="451.7" r="3.4" fill="#1414b4" stroke="#a8a8e6" stroke-width="0.7"/><text x="110.4" y="455.7" fill="#dcdcdc" text-anchor="end">470</text><circle cx="100.9" cy="415.0" r="3.4" fill="#1a34b8" stroke="#a8a8e6" stroke-width="0.7"/><text x="92.9" y="419.0" fill="#dcdcdc" text-anchor="end">480</text><circle cx="76.5" cy="335.6" r="3.4" fill="#1594b8"/><text x="84.1" y="339.6" fill="#2a4a58">490</text><circle cx="56.7" cy="216.5" r="3.4" fill="#1fbf74"/><text x="64.3" y="220.5" fill="#333">500</text><circle cx="59.7" cy="112.8" r="3.4" fill="#1cc83c"/><text x="67.3" y="116.8" fill="#333">510</text><circle cx="91.9" cy="71.9" r="3.4" fill="#19c419"/><text x="78.6" y="78.5" fill="#dcdcdc" text-anchor="end">520</text><circle cx="134.7" cy="85.5" r="3.4" fill="#2fc11f"/><text x="142.3" y="89.5" fill="#dcdcdc">530</text><circle cx="174.6" cy="110.8" r="3.4" fill="#3cb81e"/><text x="182.2" y="114.8" fill="#dcdcdc">540</text><circle cx="251.0" cy="174.3" r="3.4" fill="#6e9a14"/><text x="258.6" y="178.3" fill="#dcdcdc">560</text><circle cx="325.2" cy="241.8" r="3.4" fill="#a88a12"/><text x="332.8" y="245.8" fill="#dcdcdc">580</text><circle cx="386.2" cy="297.7" r="3.4" fill="#b5521a"/><text x="393.8" y="301.7" fill="#dcdcdc">600</text><circle cx="420.5" cy="329.1" r="3.4" fill="#c21414" stroke="#e6a8a8" stroke-width="0.7"/><text x="428.1" y="333.1" fill="#dcdcdc">620</text><circle cx="443.5" cy="350.1" r="3.4" fill="#c81010" stroke="#e6a8a8" stroke-width="0.7"/><text x="435.5" y="354.1" fill="#8a1a22" text-anchor="end">700</text></g>
<g font-family="Liberation Sans, sans-serif" font-size="9.95" font-weight="bold" fill="#fff" text-anchor="end"><text x="437" y="82" xml:space="preserve" textLength="259.2" lengthAdjust="spacingAndGlyphs">Input:  L365drvXP2101_T664_matte_50P_20220124.icm</text><text x="437" y="94.5" textLength="263.7" lengthAdjust="spacingAndGlyphs">Output: XP2101_T664_IBM90g_IJP_B_50P_20220124.icm</text><text x="437" y="107.3" xml:space="preserve" textLength="150.3" lengthAdjust="spacingAndGlyphs">White point:  x = 0.387  y = 0.378</text><text x="437" y="120" textLength="96.1" lengthAdjust="spacingAndGlyphs">24-Jan-2022 23:03:40</text></g>
<g font-family="Liberation Sans, sans-serif" font-size="10.6" fill="#262626"><text x="52.3" y="493.2" text-anchor="middle">0</text><text x="105.5" y="493.2" text-anchor="middle">0.1</text><text x="158.8" y="493.2" text-anchor="middle">0.2</text><text x="212.1" y="493.2" text-anchor="middle">0.3</text><text x="265.3" y="493.2" text-anchor="middle">0.4</text><text x="318.6" y="493.2" text-anchor="middle">0.5</text><text x="371.8" y="493.2" text-anchor="middle">0.6</text><text x="425.1" y="493.2" text-anchor="middle">0.7</text><text x="48.2" y="483.8" text-anchor="end">0</text><text x="48.2" y="434.9" text-anchor="end">0.1</text><text x="48.2" y="385.9" text-anchor="end">0.2</text><text x="48.2" y="336.9" text-anchor="end">0.3</text><text x="48.2" y="288.0" text-anchor="end">0.4</text><text x="48.2" y="239.1" text-anchor="end">0.5</text><text x="48.2" y="190.1" text-anchor="end">0.6</text><text x="48.2" y="141.2" text-anchor="end">0.7</text><text x="48.2" y="92.2" text-anchor="end">0.8</text></g>
<g font-family="Liberation Sans, sans-serif" font-weight="bold" fill="#111"><text x="249.7" y="59.5" font-size="11.9" text-anchor="middle">CIE 1931 xy Chromaticity diagram</text><text x="248.5" y="507" font-size="11.5" text-anchor="middle">x</text><text transform="translate(24,274.5) rotate(-90)" font-size="11.5" text-anchor="middle">y</text></g>
</svg>
<!-- title bar -->
<svg class="abs" style="left:8.2px;top:6.1px" width="14" height="14.5" viewBox="0 0 14 14.5">
<rect width="14" height="14.5" fill="#060606"/>
<path d="M.5 7.6L3 5.6L7.2 3.4L5.6 6L5.2 8.6L3 9.6z" fill="#2aa6a0"/>
<path d="M1.2 7.6L3.2 6.6L4.6 7.8L2.8 8.8z" fill="#8fd8d0"/>
<path d="M8.3 3L9.3 1.6L10.4 2.2L10.9 9L9.6 10.6L7.6 12.6L5.6 12.2L6.4 10.4L8 8.6z" fill="#d83812"/>
<path d="M9 2L10 2L10.2 9.4L9 10.4z" fill="#ffc040"/>
<path d="M5.2 11.9a1.5 1.4 0 1 0 3 0a1.5 1.4 0 1 0 -3 0z" fill="#f2e21c"/>
<path d="M11.3 5.2L12.6 9.2L11.6 9.2z" fill="#7a2410"/>
</svg>
<div class="ttl">Gamutvision 1.4</div>
<svg class="abs" style="left:600px;top:0" width="120" height="28" viewBox="0 0 120 28">
<path d="M9.5 14h8.6" stroke="#222" stroke-width="1.3" fill="none"/>
<rect x="50.4" y="9.7" width="8.2" height="8.2" stroke="#111" stroke-width="1.1" fill="none"/>
<path d="M91.2 10l8.6 8.4M99.8 10l-8.6 8.4" stroke="#111" stroke-width="1.1" fill="none"/>
<path d="M6 .5h4M14 .5h3M20 .5h5M30 .5h4M38 .5h2M60 .5h3M66 .5h4M75 .5h3M82 .5h5M92 .5h4M99 .5h3" stroke="#666" stroke-width="1" fill="none" opacity=".55"/>
</svg>
<div class="abs" style="left:716.4px;top:28px;width:1px;height:559px;background:#c4c4c4"></div>
<div class="mi" style="left:7px;top:31px">File</div>
<div class="mi" style="left:37px;top:31px">Settings</div>
<div class="mi" style="left:90px;top:31px">Help</div>

<!-- hue panel -->
<div class="abs" id="hue" style="left:497px;top:51px;width:210px;height:209px"></div>
<svg id="vsh" class="abs" style="left:497px;top:51px" width="210" height="209" viewBox="0 0 210 209"><defs><linearGradient id="cg" gradientUnits="userSpaceOnUse" x1="0" y1="0" x2="210" y2="0"><stop offset=".262" stop-color="#90b030"/><stop offset=".313" stop-color="#189048"/><stop offset=".349" stop-color="#009058"/><stop offset=".408" stop-color="#00a090"/><stop offset=".466" stop-color="#00b0d8"/><stop offset=".502" stop-color="#00b4f0"/><stop offset=".553" stop-color="#0090e0"/><stop offset=".611" stop-color="#0068c8"/><stop offset=".662" stop-color="#1450b0"/><stop offset=".699" stop-color="#5050a8"/></linearGradient><linearGradient id="cm" x1="0" y1="0" x2="0" y2="1"><stop offset="0" stop-color="#fff" stop-opacity="1"/><stop offset="1" stop-color="#fff" stop-opacity=".55"/></linearGradient><mask id="vm" maskUnits="userSpaceOnUse" x="60" y="0" width="90" height="66"><rect x="60" y="0" width="90" height="66" fill="url(#cm)"/></mask></defs>
<path d="M66 0L70 36L108 65L140 36L145 0z" fill="url(#cg)" mask="url(#vm)" opacity=".6"/></svg>
<div class="abs" style="opacity:.5;left:0;top:54px;width:1.2px;height:9px;background:repeating-linear-gradient(#4a4a4a 0 2px,transparent 2px 4px)"></div><div class="abs" style="opacity:.5;left:0;top:98px;width:1.2px;height:11px;background:#8a2a3a"></div><div class="abs" style="opacity:.5;left:0;top:121px;width:1.2px;height:13px;background:repeating-linear-gradient(#4a4a4a 0 2px,transparent 2px 4px)"></div><div class="abs" style="opacity:.5;left:0;top:204px;width:1.2px;height:8px;background:#a89080"></div><div class="abs" style="opacity:.5;left:0;top:238px;width:1.2px;height:11px;background:#2fa050"></div><div class="abs" style="opacity:.5;left:0;top:266px;width:1.2px;height:7px;background:#9ab4dc"></div><div class="abs" style="opacity:.5;left:0;top:299px;width:1.2px;height:8px;background:#6aa8e0"></div><div class="abs" style="opacity:.5;left:0;top:351px;width:1.2px;height:8px;background:#2a9a9a"></div><div class="abs" style="opacity:.5;left:0;top:376px;width:1.2px;height:7px;background:#9ab4dc"></div><div class="abs" style="opacity:.5;left:0;top:413px;width:1.2px;height:7px;background:#4a7ad0"></div>
<div class="abs" style="left:716.4px;top:65.5px;width:1.3px;height:127.5px;background:#4c4c4c"></div><div class="abs" style="left:716.4px;top:198px;width:1.3px;height:60px;background:linear-gradient(#a2a2a2 0 22px,transparent 22px 26px,#a2a2a2 26px 38px,transparent 38px 41px,#a2a2a2 41px 60px)"></div>

<!-- zoom row -->
<div class="cbx" style="left:498px;top:269px;width:10px;height:10px"></div>
<div class="lbl" style="left:514px;top:270px">Zoom</div>
<div class="fr abs" style="left:554px;top:261px;width:158px;height:25px;background:#8c8c8c;border:2px solid #454545;box-shadow:none"></div>
<div class="btn" style="left:559px;top:265px;width:35px;height:18px"><span style="top:4px">Inp</span></div>
<div class="btn" style="left:598px;top:265px;width:35px;height:18px"><span style="top:4px">I&gt;M</span></div>
<div class="btn" style="left:636px;top:265px;width:35px;height:18px"><span style="top:4px">Outp</span></div>
<div class="btn b yl" style="left:675px;top:265px;width:35px;height:18px"><span style="top:4px">O&gt;M</span></div>
<div class="btn" style="left:498px;top:285px;width:43px;height:18px"><span style="top:3px">Z-Out</span></div>
<div class="lbl" style="left:567px;top:291px">Black Pt. Comp.</div>
<div class="dd" style="left:638px;top:288px;width:71px;height:17px"><span class="t" style="top:2px">Off</span><span class="a"></span></div>

<!-- main display dropdown -->
<div class="abs" style="left:497px;top:308px;width:215px;height:22px;border:2px solid #363636;background:#cfcfcf"></div>
<div class="dd b" style="left:500px;top:310px;width:209px;height:17px"><span class="t" style="top:2px">xy Chromaticity (Saturation map)</span><span class="a"></span></div>

<!-- options panel -->
<div class="fr" style="left:497px;top:332px;width:215px;height:116px"></div>
<div class="btn dis" style="left:503px;top:338px;width:71px;height:20px"><span style="top:4px">Reset scale</span></div>
<div class="btn dis" style="left:578px;top:338px;width:68px;height:20px"><span style="top:4px">Reset view</span></div>
<div class="btn dis" style="left:651px;top:338px;width:60px;height:20px"><span style="top:4px">Top view</span></div>
<div class="cbx" style="left:502px;top:364px"><svg width="9" height="9" viewBox="0 0 9 9" style="position:absolute;left:0;top:0"><path d="M1.5 4l2 2.3l4-4.6" stroke="#000" stroke-width="1.6" fill="none"/></svg></div>
<div class="lbl" style="left:519px;top:364px">Wavelth</div>
<div class="dd" style="left:565px;top:361px;width:145px;height:17px"><span class="t" style="top:2px">Normal/gamut boundaries</span><span class="a"></span></div>
<div class="fr" style="left:497px;top:421px;width:79px;height:27px"></div>
<div class="btn b" style="left:502px;top:425px;width:70px;height:20px;font-size:12px"><span style="top:3px">Print Test</span></div>
<div class="fr" style="left:497px;top:448px;width:215px;height:27px"></div>
<div class="abs" style="left:502px;top:453px;width:208px;height:17px;border:1px solid;border-color:#8a8a8a #fdfdfd #fdfdfd #8a8a8a;box-shadow:inset 1px 1px 0 #a0a0a0;text-align:center;line-height:15px;font-size:11px"><span style="display:inline-block;transform:scaleX(.87)">not selected</span></div>

<!-- Display A -->
<div class="abs" style="left:503px;top:479px;width:129px;height:50px;border:1px solid #333"></div>
<div class="lbl b" style="left:512.5px;top:485px;font-size:11.5px">Display A</div>
<div class="btn b" style="left:586px;top:483px;width:41px;height:20px;font-size:12px"><span style="top:3px">View</span></div>
<div class="dd" style="left:506.5px;top:505px;width:34px;height:18px"><span class="t" style="top:3px;left:5px">1</span><span class="a"></span></div>
<div class="lbl" style="left:550px;top:510px">IN  OUT</div>
<div class="dd" style="left:593px;top:505.5px;width:34px;height:18px"><span class="t" style="top:3px;left:5px">3</span><span class="a"></span></div>
<div class="btn" style="left:648px;top:479px;width:62px;height:20px"><span style="top:4px">Help</span></div>
<div class="btn" style="left:648px;top:508px;width:62px;height:20px"><span style="top:4px">Exit</span></div>

<!-- Display B -->
<div class="abs" style="left:503px;top:533px;width:129px;height:50px;border:1px solid #333;background:#f4b4f4"></div>
<div class="lbl b" style="left:512.5px;top:539px;font-size:11.5px">Display B</div>
<div class="btn b yl" style="left:586px;top:537px;width:41px;height:20px;font-size:12px"><span style="top:3px">View</span></div>
<div class="dd" style="left:506.5px;top:560px;width:34px;height:18px"><span class="t" style="top:3px;left:5px">2</span><span class="a"></span></div>
<div class="lbl" style="left:550px;top:564px">IN  OUT</div>
<div class="dd" style="left:594px;top:560.5px;width:34px;height:18px"><span class="t" style="top:3px;left:5px">4</span><span class="a"></span></div>

<!-- logo -->
<svg class="abs" style="left:638px;top:536.5px" width="72" height="43" viewBox="0 0 72 43">
<rect width="72" height="43" fill="#12129a"/>
<path d="M6 0H72V10.2z" fill="#0e7a1c"/>
<path d="M3 0H6L72 10.2V15.4z" fill="#fff"/>
<path d="M2 0L72 15.4V20.6z" fill="#cc3414"/>
<path d="M1.5 0L72 20.6V22z" fill="#fff"/>
<path d="M1 0L72 22V25z" fill="#ac30bc"/>
<path d="M.6 0L72 25V26.3z" fill="#fff"/>
<path d="M5.2 6.6L28.5 17.3L10.4 25.6C7.8 25.2 5.6 21 4.4 15.5C3.6 11.5 3.6 7.6 5.2 6.6z" fill="#ffffc4"/>
<text x="36.6" y="39" font-family="Liberation Serif, serif" font-style="italic" font-weight="bold" font-size="14.6" fill="#fff" text-anchor="middle" textLength="68.5" lengthAdjust="spacingAndGlyphs">Gamutvision</text>
</svg>

<!-- bottom row -->
<div class="lbl" style="left:7px;top:520px;font-weight:bold;font-size:12px">1</div>
<div class="lbl" style="left:7px;top:567px;font-weight:bold;font-size:12px">2</div>
<div class="lbl" style="left:482px;top:520px;font-weight:bold;font-size:12px">3</div>
<div class="lbl" style="left:482px;top:567px;font-weight:bold;font-size:12px">4</div>
<svg class="abs" style="left:4px;top:537px" width="14" height="26" viewBox="0 0 14 26"><path d="M5.8 2h2.6v16.5h2.9l-4.2 6l-4.2-6h2.9z" fill="#505050"/><path d="M8.4 2h1v16.5h-1z" fill="#c8c8c8" opacity=".6"/></svg>
<svg class="abs" style="left:478.5px;top:537px" width="14" height="26" viewBox="0 0 14 26"><path d="M5.8 2h2.6v16.5h2.9l-4.2 6l-4.2-6h2.9z" fill="#505050"/><path d="M8.4 2h1v16.5h-1z" fill="#c8c8c8" opacity=".6"/></svg>

<div class="dd pl" style="left:18px;top:518px;width:227px;height:17px"><span class="t" style="top:2px">*sRGB   (IEC6 1996-2.1 sRGB)</span><span class="a"></span></div>
<div class="dd pl" style="left:250px;top:518px;width:227px;height:17px"><span class="t" style="top:2px">*sRGB   (IEC6 1996-2.1 sRGB)</span><span class="a"></span></div>
<div class="abs" style="left:18px;top:536px;width:202px;height:28px;background:#808080;border-style:solid;border-width:2px 2px 1px 2px;border-color:#5a5a5a #6e6e6e #555 #2a2a2a"></div>
<div class="abs" style="left:276px;top:536px;width:201px;height:28px;background:#808080;border-style:solid;border-width:2px 2px 1px 2px;border-color:#5a5a5a #6e6e6e #555 #2a2a2a"></div>
<div class="btn b" style="left:22px;top:541px;width:42px;height:21px;font-size:12px"><span style="top:4px">View</span></div>
<div class="dd yl" style="left:86px;top:542px;width:128px;height:17px"><span class="t" style="top:2px">None (or Print Test)</span><span class="a"></span></div>
<div class="lbl" style="left:225px;top:546px">Rendering</div>
<div class="dd yl" style="left:281px;top:542px;width:128px;height:17px"><span class="t" style="top:2px">None</span><span class="a"></span></div>
<div class="btn b" style="left:432px;top:541px;width:42px;height:21px;font-size:12px"><span style="top:4px">View</span></div>
<div class="dd yl" style="left:18px;top:566px;width:227px;height:17px"><span class="t" style="top:2px">L365drvXP2101_T664_matte_50P_20220124.ic</span><span class="a"></span></div>
<div class="dd gr" style="left:250px;top:566px;width:227px;height:17px"><span class="t" style="top:2px">XP2101_T664_IBM90g_IJP_B_50P_20220124.i</span><span class="a"></span></div>

<div class="abs" style="left:667px;top:585.3px;width:53px;height:1.7px;background:#2c2c2c"></div><div class="abs" style="left:651.5px;top:585.6px;width:2px;height:1.4px;background:#999"></div>

</body>
</html>
